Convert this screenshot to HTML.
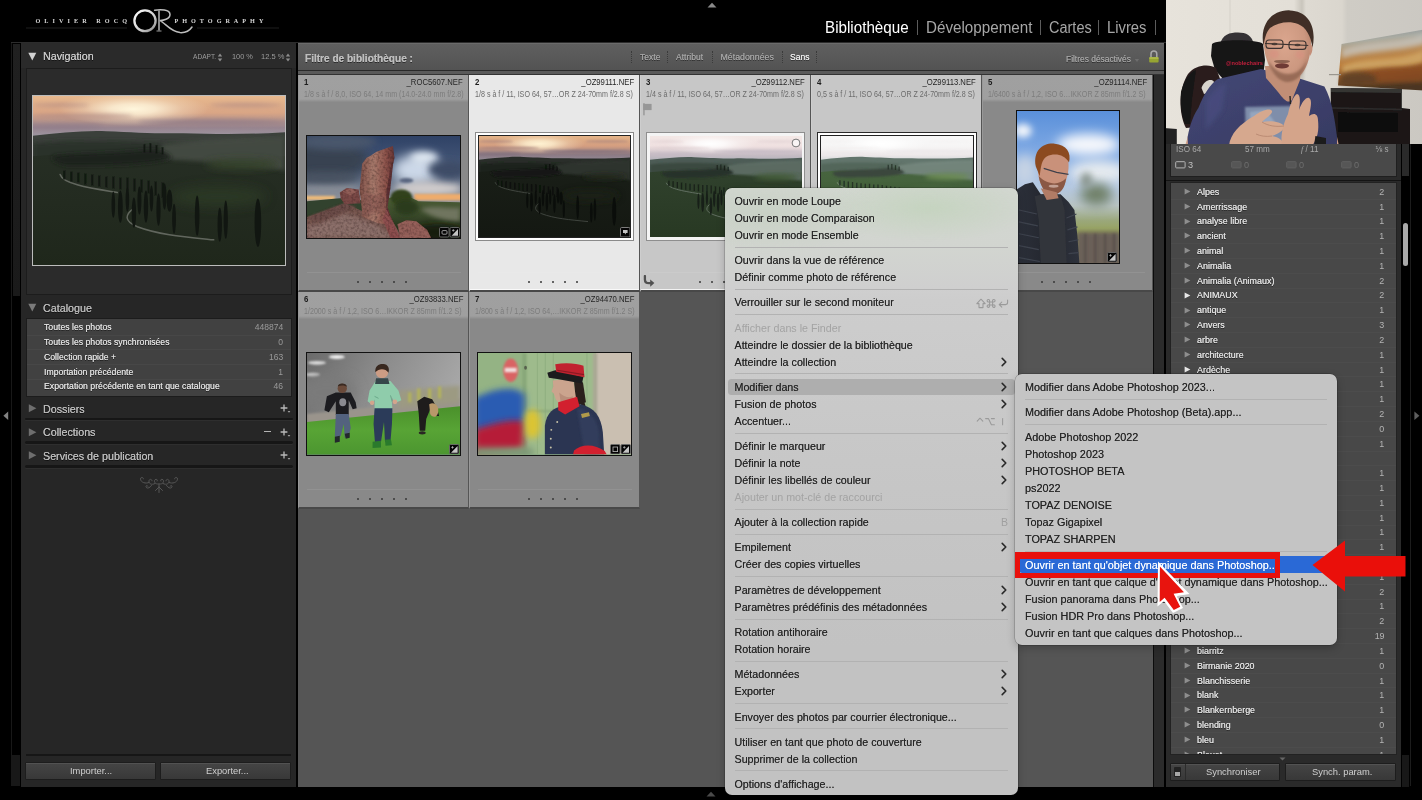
<!DOCTYPE html>
<html lang="fr">
<head>
<meta charset="utf-8">
<title>Lightroom Classic</title>
<style>
*{box-sizing:border-box;margin:0;padding:0}
html,body{width:1422px;height:800px;overflow:hidden;background:#000}
body{font-family:"Liberation Sans",sans-serif;position:relative;opacity:.999;color:#ccc;-webkit-font-smoothing:antialiased}
.abs{position:absolute}
.t{position:absolute;white-space:nowrap;line-height:1;transform-origin:0 50%;transform:scaleX(.96)}
.tr{position:absolute;white-space:nowrap;line-height:1;transform-origin:100% 50%;transform:scaleX(.95);text-align:right}
svg{display:block}
/* left panel */
#lp{left:21px;top:43px;width:275px;height:743.5px;background:#262626}
.hdr{font-size:10.9px;color:#c9c9c9;transform:scaleX(.985);text-shadow:0 0 .4px #c9c9c9,0 .8px .6px rgba(0,0,0,.55)}
.cat{font-size:9.1px;color:#dedede;transform:scaleX(.955);text-shadow:0 0 .3px #ddd,0 .8px .6px rgba(0,0,0,.55)}
.catn{font-size:9.1px;color:#9a9a9a;transform:scaleX(.94)}
.sep{position:absolute;left:25px;width:268px;height:2.6px;background:#161616;border-radius:1.5px;box-shadow:0 1px 0 #2e2e2e}
.btn{position:absolute;height:18px;background:linear-gradient(#454545,#383838);border:1px solid #1d1d1d;border-radius:1px;box-shadow:inset 0 1px 0 #525252}
/* grid */
#grid{left:298px;top:43px;width:855px;height:743.5px;background:#555}
.cell{position:absolute;width:171px;height:217px;background:#898989;border-right:1px solid #555;border-bottom:2px solid #484848;border-left:1px solid rgba(255,255,255,.13)}
.cell .h{position:absolute;left:0;top:0;right:0;height:26.5px;background:linear-gradient(#a0a0a0 0,#9f9f9f 24px,#8e8e8e 26.5px)}
.cell.s1,.cell.s2{box-shadow:inset 0 -1px 0 rgba(255,255,255,.75)}
.cell.s1{background:#e8e8e8}.cell.s1 .h{background:#e8e8e8}
.cell.s2{background:#c7c7c7}.cell.s2 .h{background:#c7c7c7}
.cn{font-size:8.2px;color:#1c1c1c;font-weight:bold}
.fn{font-size:8.2px;color:#262626;transform:scaleX(.94)}
.ex{font-size:8.8px;color:#7d7d7d}
.s1 .ex,.s2 .ex{color:#6a6a6a}
/* menus */
.menu{position:absolute;border-radius:7px;box-shadow:0 0 0 .5px rgba(0,0,0,.3),0 3px 8px rgba(0,0,0,.22);font-size:10.7px;color:#252525}
.mi{position:absolute;left:10px;white-space:nowrap;line-height:17px;height:17px;text-shadow:0 0 .4px rgba(30,30,30,.7)}
.mi.d{color:#a3a3a3;text-shadow:none}
.ms{position:absolute;left:10px;right:10px;height:1px;background:#b2b2b2}
.chev{position:absolute;right:11px;width:6px;height:10px}
.sc{position:absolute;right:10px;white-space:nowrap;line-height:17px;color:#a0a0a0;font-size:10.5px}
/* right panel */
.kw{font-size:9.5px;color:#e0e0e0;transform:scaleX(.94);text-shadow:0 0 .3px #ddd,0 .8px .6px rgba(0,0,0,.5)}
.kn{font-size:9.5px;color:#b4b4b4;transform:scaleX(.94)}
.fl{text-shadow:0 0 .35px currentColor,0 .8px .6px rgba(0,0,0,.5)}
</style>
</head>
<body>
<svg width="0" height="0" style="position:absolute">
<defs>
  <filter id="b1" filterUnits="userSpaceOnUse" x="-40" y="-40" width="380" height="300"><feGaussianBlur stdDeviation="1"/></filter>
  <filter id="b2" filterUnits="userSpaceOnUse" x="-40" y="-40" width="380" height="300"><feGaussianBlur stdDeviation="2"/></filter>
  <filter id="b3" filterUnits="userSpaceOnUse" x="-40" y="-40" width="380" height="300"><feGaussianBlur stdDeviation="3.5"/></filter>
  <filter id="b6" filterUnits="userSpaceOnUse" x="-40" y="-40" width="380" height="300"><feGaussianBlur stdDeviation="6"/></filter>
  <filter id="b05" filterUnits="userSpaceOnUse" x="-40" y="-40" width="380" height="300"><feGaussianBlur stdDeviation=".5"/></filter>

  <filter id="tex" x="0" y="0" width="100%" height="100%"><feTurbulence type="fractalNoise" baseFrequency=".38" numOctaves="2" seed="3" result="n"/><feColorMatrix in="n" type="matrix" values="0 0 0 0 0  0 0 0 0 0  0 0 0 0 0  1.3 0 0 0 -.5" result="a"/><feFlood flood-color="#3a2422"/><feComposite in2="a" operator="in" result="d"/><feComposite in="d" in2="SourceGraphic" operator="in" result="dd"/><feMerge><feMergeNode in="SourceGraphic"/><feMergeNode in="dd"/></feMerge></filter>
</defs>
</svg>
<svg width="0" height="0" style="position:absolute">
<defs>
  <!-- ============ Rock (154x103) ============ -->
  <linearGradient id="rsky" x1="0" y1="0" x2="0" y2="1"><stop offset="0" stop-color="#2f4266"/><stop offset=".3" stop-color="#465878"/><stop offset=".62" stop-color="#8e939c"/><stop offset="1" stop-color="#8a8f98"/></linearGradient>
  <linearGradient id="rland" x1="0" y1="0" x2="0" y2="1"><stop offset="0" stop-color="#4c5d36"/><stop offset=".45" stop-color="#3a4a2a"/><stop offset="1" stop-color="#181f12"/></linearGradient>
  <linearGradient id="rpil" x1="0" y1="0" x2="1" y2="0"><stop offset="0" stop-color="#7e5048"/><stop offset=".4" stop-color="#a87a6c"/><stop offset=".75" stop-color="#8e544c"/><stop offset="1" stop-color="#643434"/></linearGradient>
  <symbol id="rock" viewBox="0 0 154 103" preserveAspectRatio="none">
    <rect width="154" height="103" fill="url(#rsky)"/>
    <ellipse cx="16" cy="24" rx="46" ry="22" fill="#394251" filter="url(#b6)"/>
    <ellipse cx="30" cy="6" rx="40" ry="8" fill="#4a566c" filter="url(#b3)"/>
    <ellipse cx="110" cy="34" rx="24" ry="15" fill="#ccd8e8" filter="url(#b6)"/>
    <ellipse cx="118" cy="22" rx="14" ry="6" fill="#dfe8f2" filter="url(#b3)"/>
    <ellipse cx="122" cy="53" rx="34" ry="7" fill="#d0cccc" filter="url(#b3)"/>
    <ellipse cx="142" cy="34" rx="20" ry="9" fill="#3e4b66" filter="url(#b3)"/>
    <ellipse cx="100" cy="45" rx="7" ry="2.5" fill="#5a6680" filter="url(#b1)"/>
    <ellipse cx="22" cy="53" rx="30" ry="5" fill="#8a8f98" filter="url(#b3)"/>
    <ellipse cx="20" cy="42" rx="32" ry="6" fill="#4a5362" filter="url(#b3)"/>
    <rect x="-2" y="60.5" width="30" height="4" fill="#efbb78" filter="url(#b1)"/>
    <rect x="108" y="58.5" width="48" height="6.5" fill="#eeac6c" filter="url(#b1)"/>
    <path d="M0 66 L30 63 L42 62 L60 66 L60 103 L0 103Z" fill="#33422f" filter="url(#b05)"/>
    <path d="M78 64 C95 58 105 62 112 66 L154 67 L154 103 L78 103Z" fill="url(#rland)"/>
    <path d="M114 74 C126 69 146 74 154 72 L154 86 C140 87 126 82 114 74Z" fill="#70755f" filter="url(#b2)"/>
    <ellipse cx="95" cy="62" rx="11" ry="8" fill="#33431f" filter="url(#b1)"/><ellipse cx="100" cy="72" rx="12" ry="8" fill="#2c3a1e" filter="url(#b2)"/>
    <ellipse cx="132" cy="97" rx="26" ry="8" fill="#151b10" filter="url(#b3)"/>
    <g filter="url(#tex)">
    <!-- ground -->
    <path d="M0 82 L22 74 L38 68 L56 76 L84 82 L96 103 L0 103Z" fill="#76564f"/>
    <path d="M0 92 L40 78 L70 90 L90 103 L0 103Z" fill="#8c706a" filter="url(#b2)"/>
    <path d="M0 82 L38 68 L50 72 L10 88Z" fill="#6c4e4a" filter="url(#b1)"/>
    <!-- small rock -->
    <path d="M33 57 L40 52.5 L52 54 L54 68 L38 69 L34 63Z" fill="#7a4846"/>
    <path d="M36 56 L44 53 L50 56 L44 60Z" fill="#94605a" filter="url(#b05)"/>
    <!-- pillar -->
    <path d="M64 20 L70 16 L86.5 10 L88 22 L85 36 L83 53 L80.5 72 L88 90 L72 88 L56 82 L53 54 L55.5 28 L60 22Z" fill="url(#rpil)"/>
    <path d="M84 32 L87 24 L84 52 L81 72 L86 87 L79 82 L80 56Z" fill="#5e3234" filter="url(#b05)"/>
    <path d="M57 56 C64 60 74 58 80 64 L80 74 L58 80Z" fill="#8a5a52" opacity=".7" filter="url(#b1)"/>
    <path d="M91 89 L100 85 L110 86 L121 95 L125 103 L94 103Z" fill="#95605a"/>
    <path d="M80 74 L88 90 L94 103 L84 103 L76 84Z" fill="#8e5050" filter="url(#b05)"/>
    </g>
  </symbol>

  <!-- ============ Portrait (103x154) ============ -->
  <linearGradient id="psky" x1="0" y1="0" x2="0" y2="1"><stop offset="0" stop-color="#5a90da"/><stop offset=".28" stop-color="#80aae4"/><stop offset=".5" stop-color="#b4c8e2"/><stop offset=".62" stop-color="#b9c4c4"/><stop offset=".72" stop-color="#9aa77a"/><stop offset=".8" stop-color="#97a258"/><stop offset="1" stop-color="#807c5a"/></linearGradient>
  <linearGradient id="pjk" x1="0" y1="0" x2="1" y2="0"><stop offset="0" stop-color="#2c303a"/><stop offset=".5" stop-color="#23262e"/><stop offset="1" stop-color="#2e323c"/></linearGradient>
  <symbol id="portrait" viewBox="0 0 103 154" preserveAspectRatio="none">
    <rect width="103" height="154" fill="url(#psky)"/>
    <ellipse cx="72" cy="34" rx="32" ry="11" fill="#f6f8fc" filter="url(#b6)"/>
    <ellipse cx="6" cy="20" rx="9" ry="7" fill="#f0f4fa" filter="url(#b3)"/>
    <ellipse cx="82" cy="62" rx="30" ry="12" fill="#e6ebf0" filter="url(#b6)"/>
    <ellipse cx="8" cy="60" rx="12" ry="16" fill="#c6d3e4" filter="url(#b6)"/>
    <ellipse cx="80" cy="84" rx="16" ry="11" fill="#6f8068" filter="url(#b6)"/>
    <ellipse cx="70" cy="70" rx="6" ry="8" fill="#8a9690" filter="url(#b3)"/>
    <rect x="60" y="122" width="45" height="34" fill="#6a6058" filter="url(#b2)"/>
    <g fill="#584e48" filter="url(#b1)"><rect x="68" y="124" width="2" height="30"/><rect x="78" y="124" width="2" height="30"/><rect x="88" y="124" width="2" height="30"/><rect x="97" y="124" width="2" height="30"/></g>
    <!-- jacket -->
    <path d="M0 79 L8 74 L16 72 L24 84 L44 84 L52 92 L58 100 L61 126 L63 154 L0 154Z" fill="url(#pjk)"/>
    <path d="M18 86 L26 84 L44 85 L48 100 L50 154 L24 154 L22 110Z" fill="#33353b" filter="url(#b05)"/>
    <g stroke="#3e434e" stroke-width="1.2" filter="url(#b05)"><path d="M2 100 L20 104 M2 112 L21 116 M2 124 L22 128 M2 136 L22 140 M2 148 L23 152 M50 108 L60 104 M51 120 L61 117 M52 132 L62 130 M52 144 L62 143"/></g>
    <!-- head -->
    <path d="M21 52 C22 40 30 36 38 37 C48 38 53 46 52 58 C51 70 46 82 38 84 C30 85 23 76 21.5 64Z" fill="#c9917a"/>
    <path d="M19 56 C16 40 26 32 38 33 C50 34 55 42 52.5 52 C48 44 38 42 30 46 C25 49 24 56 23 66 Z" fill="#8c4a20"/>
    <path d="M22 66 C24 80 32 87 40 84 C47 81 49 74 49.5 68 C42 76 30 74 22 66Z" fill="#8a5844" filter="url(#b05)"/>
    <path d="M27 58 L40 62 L52 64" stroke="#40404a" stroke-width="1.2" fill="none"/>
    <ellipse cx="37" cy="76" rx="5" ry="1.4" fill="#e8d0c8" opacity=".6"/>
    <path d="M24 78 L30 90 L42 88 L40 82Z" fill="#b07c66"/>
  </symbol>

  <!-- ============ Kids (154x103) ============ -->
  <linearGradient id="kbg" x1="0" y1="0" x2="1" y2=".35"><stop offset="0" stop-color="#6a6a6a"/><stop offset=".45" stop-color="#8a8a8a"/><stop offset="1" stop-color="#a8a8a8"/></linearGradient>
  <linearGradient id="kgr" x1="0" y1="0" x2="0" y2="1"><stop offset="0" stop-color="#4a902b"/><stop offset=".5" stop-color="#58a435"/><stop offset="1" stop-color="#4c9630"/></linearGradient>
  <symbol id="kids" viewBox="0 0 154 103" preserveAspectRatio="none">
    <rect width="154" height="103" fill="url(#kbg)"/>
    <ellipse cx="30" cy="4" rx="8" ry="2" fill="#efefef" filter="url(#b1)"/><ellipse cx="10" cy="10" rx="9" ry="1.8" fill="#dedede" filter="url(#b1)"/><ellipse cx="6" cy="22" rx="7" ry="2" fill="#dcdcdc" filter="url(#b1)"/>
    <ellipse cx="20" cy="40" rx="30" ry="18" fill="#7a7a7a" filter="url(#b6)"/>
    <path d="M0 62 L154 46 L154 56 L0 72Z" fill="#9a948c" filter="url(#b1)"/>
    <path d="M92 38 L154 33 L154 50 L92 56Z" fill="#9c9a82" filter="url(#b2)"/>
    <g fill="#b4b45a" filter="url(#b1)"><rect x="102" y="40" width="3" height="10"/><rect x="111" y="36" width="3" height="12"/><rect x="122" y="36" width="3" height="12"/><rect x="132" y="34" width="3" height="12"/></g>
    <path d="M0 70 L154 54 L154 103 L0 103Z" fill="url(#kgr)"/>
    <!-- left kid -->
    <path d="M20 44 L29 40 L44 40 L49 50 L50 56 L46 57 L42 48 L42 63 L29 63 L29 49 L22 60 L17.5 58Z" fill="#1c1c20"/>
    <circle cx="35.5" cy="36" r="4.7" fill="#6a4a3a"/>
    <path d="M31 34 C31 30 40 30 40.4 34.5 C38 32.5 34 32.5 31 34Z" fill="#3a2a22"/>
    <ellipse cx="36" cy="50" rx="3.5" ry="4" fill="#8a8a90" filter="url(#b05)"/>
    <path d="M29 62 L42 62 L44 76 L42 84 L38 86 L37 72 L34 84 L29.5 88 L28 84Z" fill="#53627e"/>
    <path d="M28 85 L33 84 L33 90 L28 91Z M38 82 L43 81 L43 86 L39 87Z" fill="#23282c"/>
    <!-- center kid -->
    <path d="M63 38 L69 28.5 L84 28.5 L92 38 L95 48 L88 51 L85 44 L86 58 L68 58 L68 47 L66 53 L61 49Z" fill="#8fccab"/>
    <path d="M68 44 L72 46 M84 43 L86 50" stroke="#6aa88a" stroke-width="1"/>
    <circle cx="75.5" cy="19.5" r="6.2" fill="#cc9c84"/>
    <path d="M68.8 19.5 C68 12 74 10.2 78.5 11.4 C82.5 12.6 83 17 82 20 C79 15.5 72.5 15.5 68.8 19.5Z" fill="#38281f"/>
    <path d="M69.5 25.5 L81.5 25.5 L83 31.5 L68.5 31.5Z" fill="#36474a"/>
    <circle cx="88.5" cy="49.5" r="2.4" fill="#d4a48c"/><circle cx="65.5" cy="50.5" r="2.2" fill="#d4a48c"/>
    <path d="M68 56 L86 56 L85.5 72 L84 90 L78.5 90 L77.5 70 L74.5 90 L68.5 92 L67 72Z" fill="#2b3b59"/>
    <path d="M66 90 L74.5 89 L74.5 96 L66 96.5Z M78.5 88 L84.5 87.5 L85.5 93.5 L79 94Z" fill="#2a7a2c"/>
    <!-- right kid -->
    <path d="M111 49 L118 44.5 L126 47 L131 56 L133 64 L128 64 L124 57 L120 67 L119 79 L113.5 79 L112.5 62Z" fill="#1e1c1c"/>
    <path d="M123 52 C128 49 133 53 132 60 C131 66 126 66 124 62Z" fill="#b8986a"/>
    <ellipse cx="116" cy="81" rx="3.5" ry="1.6" fill="#2a2624"/>
  </symbol>

  <!-- ============ Soldier (155x103) ============ -->
  <symbol id="soldier" viewBox="0 0 155 103" preserveAspectRatio="none">
    <rect width="155" height="103" fill="#9ebb8c"/>
    <rect x="0" y="0" width="46" height="103" fill="#94b384"/>
    <rect x="45" y="0" width="4" height="103" fill="#86a678" filter="url(#b1)"/>
    <g stroke="#92b182" stroke-width="1.2" filter="url(#b05)"><path d="M60 0 V103 M68 0 V103 M76 0 V103 M110 0 V103"/></g>
    <rect x="50" y="58" width="70" height="2" fill="#8aa87a" filter="url(#b1)"/>
    <rect x="119" y="0" width="36" height="103" fill="#cabfb1"/>
    <rect x="116" y="0" width="4.5" height="103" fill="#aaa894" filter="url(#b1)"/>
    <ellipse cx="33" cy="17.5" rx="7.5" ry="12" fill="#d96464" filter="url(#b1)"/>
    <rect x="27" y="15" width="12" height="4.5" fill="#f2dede" filter="url(#b1)"/>
    <ellipse cx="48" cy="15" rx="1.4" ry="2" fill="#55604c" filter="url(#b05)"/>
    <!-- flag -->
    <path d="M-4 46 C16 36 36 32 47 42 L47 78 L-4 82Z" fill="#2a5bb2" filter="url(#b3)"/>
    <path d="M-4 78 C20 70 36 66 47 70 L45 98 L-4 104Z" fill="#b61f38" filter="url(#b3)"/>
    <ellipse cx="55" cy="72" rx="8.5" ry="15" fill="#dcc430" filter="url(#b3)"/>
    <rect x="-4" y="96" width="60" height="10" fill="#7e9a78" filter="url(#b3)"/>
    <!-- soldier -->
    <path d="M97 26 L106 30 L109 50 L98 54Z" fill="#2a201c"/>
    <path d="M104 44 C108 50 110 56 108 60 L104 58Z" fill="#2a201c"/>
    <path d="M75.5 28 L96 26 L99 46 L93 53 L83 53 L78.5 47 L76.5 41 L74.2 39 L76 34Z" fill="#cba48e"/>
    <path d="M82 40 C86 44 92 46 96 44 L94 52 L84 53Z" fill="#b88e7a" filter="url(#b05)"/>
    <path d="M70 20 L78 17.5 L106.5 24 L105 31 L80 26.5 L71.5 25Z" fill="#1b1b1d"/>
    <path d="M78 11.5 C88 9.5 100 10.5 106.5 13 L107.5 24.5 L79 19Z" fill="#c1222f"/>
    <path d="M80 17.5 L107 22" stroke="#8a1a24" stroke-width="1.2"/>
    <path d="M67.5 74 C69 60 77 55 86 54 L104 52 C118 56 124 64 126 80 L127.5 103 L67.5 103Z" fill="#2b3552"/>
    <path d="M100 56 C112 58 120 66 122 80 L123 103 L108 103Z" fill="#323d5c" filter="url(#b1)"/>
    <path d="M81 50 L100 44.5 L102.5 54 L88 62.5 L81 58Z" fill="#d2202f"/>
    <path d="M104 62 L112 60 L113 64 L105 66Z" fill="#b09a4a"/>
    <g fill="#c8c2a8"><circle cx="74" cy="78" r="1"/><circle cx="73.5" cy="87" r="1"/><circle cx="73.5" cy="96" r="1"/><circle cx="80" cy="70" r="1"/></g>
    <path d="M97 99 C104 92 118 92 128 99.5 L130 103 L96 103Z" fill="#d2202f"/>
  </symbol>
</defs>
</svg>
<!-- ===== top bar ===== -->
<div class="abs" style="left:0;top:0;width:1422px;height:43px;background:#000"></div>
<div class="abs" style="left:11px;top:42px;width:1400px;height:1px;background:#2c2c2c"></div>
<!-- identity plate -->
<svg class="abs" style="left:20px;top:0" width="280" height="44" viewBox="0 0 280 44">
  <defs>
    <linearGradient id="lgO" x1="0" y1="0" x2="1" y2="1"><stop offset="0" stop-color="#fff"/><stop offset=".6" stop-color="#cfcfcf"/><stop offset="1" stop-color="#8a8a8a"/></linearGradient>
  </defs>
  <text x="15.5" y="23" font-family="Liberation Serif" font-weight="bold" font-size="6.2" letter-spacing="4.05" fill="#d8d8d8">OLIVIER  ROCQ</text>
  <text x="154.5" y="22.6" font-family="Liberation Serif" font-weight="bold" font-size="6.2" letter-spacing="3.98" fill="#d8d8d8">PHOTOGRAPHY</text>
  <rect x="6" y="27.6" width="101" height=".8" fill="#262626"/>
  <rect x="177" y="27.6" width="82" height=".8" fill="#262626"/>
  <ellipse cx="125" cy="20.8" rx="10.6" ry="10.4" fill="none" stroke="url(#lgO)" stroke-width="2.3"/>
  <path d="M134.6 10.2 C140 9.4 150 9.2 150 14.6 C150 19.2 143 20.6 139.4 20.4 C145 22.5 150 31.5 160 32.6 C166 33 170 30 172 27" fill="none" stroke="#bdbdbd" stroke-width="1.5" stroke-linecap="round"/>
  <path d="M139 10.2 L139 30.5" stroke="#9a9a9a" stroke-width="1.8"/>
  <path d="M136.5 31 L141.5 31" stroke="#9a9a9a" stroke-width="1"/>
</svg>
<!-- top centre disclosure triangle -->
<svg class="abs" style="left:707px;top:2px" width="10" height="6"><path d="M0.5 5.5 L5 0.8 L9.5 5.5Z" fill="#8a8a8a"/></svg>
<svg class="abs" style="left:706px;top:791px" width="10" height="6"><path d="M0.5 5.5 L5 0.8 L9.5 5.5Z" fill="#4a4a4a"/></svg>
<!-- module picker -->
<div class="t" style="left:825px;top:19.6px;font-size:15.6px;color:#fff;transform:scaleX(.975)">Bibliothèque</div>
<div class="t" style="left:926px;top:19.6px;font-size:15.6px;color:#a6a6a6;transform:scaleX(.975)">Développement</div>
<div class="t" style="left:1049px;top:19.6px;font-size:15.6px;color:#a6a6a6;transform:scaleX(.93)">Cartes</div>
<div class="t" style="left:1107px;top:19.6px;font-size:15.6px;color:#a6a6a6;transform:scaleX(.95)">Livres</div>
<div class="abs" style="left:917px;top:20px;width:1px;height:15px;background:#5c5c5c"></div>
<div class="abs" style="left:1040px;top:20px;width:1px;height:15px;background:#5c5c5c"></div>
<div class="abs" style="left:1098px;top:20px;width:1px;height:15px;background:#5c5c5c"></div>
<div class="abs" style="left:1155px;top:20px;width:1px;height:15px;background:#5c5c5c"></div>
<!-- side strips / arrows -->
<div class="abs" style="left:11px;top:43px;width:1px;height:743px;background:#181818"></div>
<div class="abs" style="left:13px;top:44px;width:7px;height:252px;background:linear-gradient(#202020,#1a1a1a)"></div>
<div class="abs" style="left:12px;top:755px;width:8px;height:31px;background:#181818"></div>
<svg class="abs" style="left:3px;top:410.5px" width="6" height="10"><path d="M5.2 0.6 L0.4 4.8 L5.2 9Z" fill="#828282"/></svg>
<!-- ===== left panel ===== -->
<div id="lp" class="abs">
  <div class="abs" style="left:0;top:0;width:275px;height:25px;background:#2a2a2a"></div>
</div>
<svg class="abs" style="left:28px;top:52px" width="9" height="9"><path d="M0.3 0.8 L8.3 0.8 L4.3 8.4Z" fill="#d2d2d2"/></svg>
<div class="t hdr" style="left:43px;top:51px">Navigation</div>
<div class="t" style="left:192.5px;top:53.3px;font-size:7px;color:#9c9c9c;transform:scaleX(.94)">ADAPT.</div>
<svg class="abs" style="left:217px;top:52.5px" width="6" height="9"><path d="M3 0.6 L5.2 3.4 L0.8 3.4Z M3 8.4 L5.2 5.6 L0.8 5.6Z" fill="#8e8e8e"/></svg>
<div class="t" style="left:232px;top:53.3px;font-size:7.6px;color:#9c9c9c;transform:scaleX(.97)">100 %</div>
<div class="t" style="left:260.5px;top:53.3px;font-size:7.6px;color:#9c9c9c;transform:scaleX(.99)">12.5 %</div>
<svg class="abs" style="left:285px;top:52.5px" width="6" height="9"><path d="M3 0.6 L5.2 3.4 L0.8 3.4Z M3 8.4 L5.2 5.6 L0.8 5.6Z" fill="#8e8e8e"/></svg>
<!-- navigator box -->
<div class="abs" style="left:26px;top:68px;width:266px;height:227px;background:#2b2b2b;border:1px solid #1c1c1c"></div>
<div class="abs" id="navimg" style="left:32px;top:95px;width:254px;height:171px;border:1.5px solid #bcbcbc;background:#222;overflow:hidden">
  <svg width="100%" height="100%" viewBox="0 0 251 168" preserveAspectRatio="none" style="display:block">
<defs>
<linearGradient id="tnavsky" x1="0" y1="0" x2="0" y2="1"><stop offset="0" stop-color="#e8b98e"/><stop offset=".4" stop-color="#d9a585"/><stop offset=".75" stop-color="#98858f"/><stop offset="1" stop-color="#9f9aa6"/></linearGradient>
<radialGradient id="tnavsun" cx=".5" cy=".5" r=".5"><stop offset="0" stop-color="#fff6dc" stop-opacity="1"/><stop offset=".3" stop-color="#fff6dc" stop-opacity=".8"/><stop offset=".65" stop-color="#fff6dc" stop-opacity=".3"/><stop offset="1" stop-color="#fff6dc" stop-opacity="0"/></radialGradient>
<linearGradient id="tnavfore" x1="0" y1="0" x2="0" y2="1"><stop offset="0" stop-color="#262e24"/><stop offset="1" stop-color="#1f271b"/></linearGradient>
</defs>
<rect width="251" height="168" fill="#1f271b"/>
<rect width="251" height="42" fill="url(#tnavsky)"/>
<ellipse cx="100" cy="13" rx="75" ry="17" fill="url(#tnavsun)"/>
<g filter="url(#b2)" fill="#b08a84" opacity=".7"><ellipse cx="50" cy="20" rx="50" ry="2.2"/><ellipse cx="28" cy="9" rx="28" ry="1.8"/><ellipse cx="212" cy="9" rx="36" ry="2"/></g>
<g filter="url(#b2)" fill="#8e7a88" opacity=".75"><ellipse cx="180" cy="26" rx="75" ry="2.8"/><ellipse cx="30" cy="30" rx="40" ry="2.4"/></g>
<path d="M0 39.5 C25 37 50 34 73 35 C100 36 120 37.5 150 37 C180 38 215 38.5 251 36 L251 70 L0 70Z" fill="#3a403b" filter="url(#b05)"/>
<path d="M0 47 C40 43 90 44 140 47 C180 49 215 44 251 42 L251 90 L0 90Z" fill="#2b322b" filter="url(#b2)"/>
<path d="M0 60 C40 55 90 60 140 64 C175 60 215 58 251 60 L251 168 L0 168Z" fill="url(#tnavfore)"/>
<path d="M128 48 C170 43 215 41 251 40 L251 74 C214 68 172 66 128 62Z" fill="#485047" opacity=".8" filter="url(#b2)"/>
<ellipse cx="208" cy="68" rx="36" ry="5" fill="#35432c" filter="url(#b3)"/>
<ellipse cx="185" cy="100" rx="48" ry="10" fill="#2f3d28" opacity=".7" filter="url(#b6)"/>
<path d="M20 60 C40 56 80 57 108 54 C124 52 136 56 138 62 C120 69 60 70 32 69 C22 67 18 63 20 60Z" fill="#1e231e" filter="url(#b2)"/>
<path d="M27 78 C30 88 60 92 84 96 M100 112 C92 118 90 124 104 130 C125 138 150 140 180 143" fill="none" stroke="#72766e" stroke-width="1.5" stroke-linecap="round" filter="url(#b05)" opacity=".8"/>
<g fill="#111611">
<g filter="url(#b05)" opacity=".85"><path d="M30 74 h2.4 v9 h-2.4z M37 75 h2.4 v10 h-2.4z M44 76 h2.2 v10 h-2.2z M51 77 h2.2 v11 h-2.2z M58 78 h2.2 v11 h-2.2z M65 79 h2.2 v11 h-2.2z M72 80 h2.2 v11 h-2.2z M79 80 h2.2 v12 h-2.2z M86 81 h2.2 v12 h-2.2z M93 81 h2.2 v13 h-2.2z M100 82 h2.2 v13 h-2.2z M107 83 h2.2 v13 h-2.2z M114 84 h2.2 v13 h-2.2z M121 85 h2.2 v14 h-2.2z M128 86 h2.6 v15 h-2.6z"/>
<path d="M110 48 h2 v8 h-2z M116 47 h2 v9 h-2z M122 49 h2 v8 h-2z M128 51 h2 v7 h-2z"/></g>
<ellipse cx="80" cy="108" rx="1.8" ry="13"/><ellipse cx="87" cy="110" rx="2.4" ry="16"/><ellipse cx="94" cy="103" rx="1.8" ry="12"/>
<ellipse cx="100.5" cy="116" rx="2.2" ry="15"/><ellipse cx="106" cy="104" rx="2" ry="14"/><ellipse cx="112.5" cy="110" rx="2.2" ry="16"/><ellipse cx="118" cy="102" rx="1.8" ry="13"/>
<ellipse cx="125" cy="113" rx="2.1" ry="16"/><ellipse cx="131" cy="100" rx="2" ry="13"/><ellipse cx="136" cy="104" rx="2.8" ry="11"/>
<ellipse cx="140.5" cy="122" rx="1.9" ry="15"/><ellipse cx="163.5" cy="119" rx="2.3" ry="20"/>
<ellipse cx="186" cy="128" rx="2.2" ry="17"/><ellipse cx="192" cy="123" rx="2.1" ry="19"/><ellipse cx="224" cy="126" rx="3.3" ry="24"/>
</g>
</svg>
</div>
<!-- catalogue -->
<svg class="abs" style="left:28px;top:303px" width="9" height="9"><path d="M0.3 0.8 L8.3 0.8 L4.3 8.4Z" fill="#7a7a7a"/></svg>
<div class="t hdr" style="left:43px;top:302.5px;color:#b4b4b4">Catalogue</div>
<div class="abs" style="left:26px;top:318px;width:266px;height:79px;background:#414141;border:1px solid #1c1c1c"></div>
<div class="abs" style="left:27px;top:334.5px;width:264px;height:1px;background:#474747"></div>
<div class="abs" style="left:27px;top:349.3px;width:264px;height:1px;background:#474747"></div>
<div class="abs" style="left:27px;top:364px;width:264px;height:1px;background:#474747"></div>
<div class="abs" style="left:27px;top:378.8px;width:264px;height:1px;background:#474747"></div>
<div class="t cat" style="left:43.5px;top:323.2px">Toutes les photos</div><div class="tr catn" style="right:1139px;top:323.2px">448874</div>
<div class="t cat" style="left:43.5px;top:338px">Toutes les photos synchronisées</div><div class="tr catn" style="right:1139px;top:338px">0</div>
<div class="t cat" style="left:43.5px;top:352.7px">Collection rapide +</div><div class="tr catn" style="right:1139px;top:352.7px">163</div>
<div class="t cat" style="left:43.5px;top:367.6px">Importation précédente</div><div class="tr catn" style="right:1139px;top:367.6px">1</div>
<div class="t cat" style="left:43.5px;top:382.2px">Exportation précédente en tant que catalogue</div><div class="tr catn" style="right:1139px;top:382.2px">46</div>
<!-- collapsed panels -->
<svg class="abs" style="left:28px;top:404px" width="9" height="9"><path d="M0.8 0.3 L8.4 4.3 L0.8 8.3Z" fill="#6e6e6e"/></svg>
<div class="t hdr" style="left:43px;top:403.7px;color:#b9b9b9">Dossiers</div>
<svg class="abs" style="left:279.5px;top:404px" width="11" height="10" viewBox="0 0 11 10"><path d="M4 0.6 V7.4 M0.6 4 H7.4" stroke="#b9b9b9" stroke-width="1.3" fill="none"/><path d="M7.6 7 H10.4 L9 8.8Z" fill="#a0a0a0"/></svg>
<div class="sep" style="top:417.8px"></div>
<svg class="abs" style="left:28px;top:427.5px" width="9" height="9"><path d="M0.8 0.3 L8.4 4.3 L0.8 8.3Z" fill="#6e6e6e"/></svg>
<div class="t hdr" style="left:43px;top:427.2px;color:#b9b9b9">Collections</div>
<div class="abs" style="left:263.7px;top:431px;width:7.6px;height:1.4px;background:#b4b4b4"></div>
<svg class="abs" style="left:279.5px;top:427.7px" width="11" height="10" viewBox="0 0 11 10"><path d="M4 0.6 V7.4 M0.6 4 H7.4" stroke="#b9b9b9" stroke-width="1.3" fill="none"/><path d="M7.6 7 H10.4 L9 8.8Z" fill="#a0a0a0"/></svg>
<div class="sep" style="top:441.4px"></div>
<svg class="abs" style="left:28px;top:451px" width="9" height="9"><path d="M0.8 0.3 L8.4 4.3 L0.8 8.3Z" fill="#6e6e6e"/></svg>
<div class="t hdr" style="left:43px;top:450.7px;color:#b9b9b9">Services de publication</div>
<svg class="abs" style="left:279.5px;top:451.3px" width="11" height="10" viewBox="0 0 11 10"><path d="M4 0.6 V7.4 M0.6 4 H7.4" stroke="#b9b9b9" stroke-width="1.3" fill="none"/><path d="M7.6 7 H10.4 L9 8.8Z" fill="#a0a0a0"/></svg>
<div class="sep" style="top:465px"></div>
<!-- ornament -->
<svg class="abs" style="left:138px;top:475px" width="42" height="19" viewBox="0 0 42 19">
  <g fill="none" stroke="#565656" stroke-width="1" stroke-linecap="round">
    <path d="M21 17.5 L21 9"/><path d="M21 12 L17.5 15.5 M21 12 L24.5 15.5"/>
    <path d="M20.5 9 C17 9.5 15.5 6.5 17 4.8 C18.2 3.6 20 4.6 19.2 6"/><path d="M21.5 9 C25 9.5 26.5 6.5 25 4.8 C23.8 3.6 22 4.6 22.8 6"/>
    <path d="M17 8.5 C13.5 10.5 10.5 8.5 11 5.8 C11.4 3.8 14 3.8 14 5.8"/><path d="M25 8.5 C28.5 10.5 31.5 8.5 31 5.8 C30.6 3.8 28 3.8 28 5.8"/>
    <path d="M11 7.5 C7.5 9 3 7.5 2.5 4.2 C2.3 2 5.2 1.6 5.4 3.8"/><path d="M31 7.5 C34.5 9 39 7.5 39.5 4.2 C39.7 2 36.800000000000004 1.6 36.6 3.8"/>
    <path d="M13.5 10.5 C11.5 13.5 8.5 13.8 8 11.8 C7.7 10.4 9.6 10 9.8 11.2"/><path d="M28.5 10.5 C30.5 13.5 33.5 13.8 34 11.8 C34.3 10.4 32.4 10 32.2 11.2"/>
  </g>
</svg>
<!-- bottom buttons -->
<div class="abs" style="left:26px;top:753.5px;width:265px;height:2px;background:#161616"></div>
<div class="btn" style="left:25px;top:762px;width:131px"></div>
<div class="btn" style="left:160px;top:762px;width:131px"></div>
<div class="t" style="left:69.5px;top:766.3px;font-size:9.8px;color:#cfcfcf;transform:scaleX(.955)">Importer...</div>
<div class="t" style="left:205.5px;top:766.3px;font-size:9.8px;color:#cfcfcf;transform:scaleX(.955)">Exporter...</div>
<!-- ===== grid ===== -->
<div id="grid" class="abs"></div>
<div class="abs" style="left:298px;top:43px;width:866px;height:28px;background:linear-gradient(#5f5f5f,#535353);border-top:1px solid #6b6b6b;border-bottom:1.5px solid #2a2a2a"></div>
<div class="abs" style="left:298px;top:71px;width:866px;height:4px;background:#5a5a5a;border-bottom:1.4px solid #333"></div>
<div class="abs" style="left:1153px;top:75px;width:11px;height:711.5px;background:#2b2b2b;border-left:1.5px solid #0c0c0c"></div>
<div class="t fl" style="left:305px;top:53.2px;font-size:10.6px;color:#bdbdbd;font-weight:bold;transform:scaleX(.95)">Filtre de bibliothèque :</div>
<div class="t fl" style="left:639.5px;top:52.8px;font-size:8.8px;color:#a4a4a4;transform:scaleX(.97)">Texte</div>
<div class="t fl" style="left:675.5px;top:52.8px;font-size:8.8px;color:#a4a4a4;transform:scaleX(.97)">Attribut</div>
<div class="t fl" style="left:720.5px;top:52.8px;font-size:8.8px;color:#a4a4a4;transform:scaleX(1)">Métadonnées</div>
<div class="t fl" style="left:790px;top:52.8px;font-size:8.8px;color:#ececec;transform:scaleX(.97)">Sans</div>
<div class="abs" style="left:631px;top:51px;width:0;height:12px;border-left:1px dotted #3a3a3a"></div>
<div class="abs" style="left:667px;top:51px;width:0;height:12px;border-left:1px dotted #3a3a3a"></div>
<div class="abs" style="left:712px;top:51px;width:0;height:12px;border-left:1px dotted #3a3a3a"></div>
<div class="abs" style="left:782px;top:51px;width:0;height:12px;border-left:1px dotted #3a3a3a"></div>
<div class="abs" style="left:816px;top:51px;width:0;height:12px;border-left:1px dotted #3a3a3a"></div>
<div class="t fl" style="left:1066px;top:55px;font-size:8.8px;color:#a2a2a2;transform:scaleX(.955)">Filtres désactivés</div>
<svg class="abs" style="left:1134px;top:58px" width="6" height="5"><path d="M0.8 1 L5.2 1 L3 4Z" fill="#6e6e6e"/></svg>
<svg class="abs" style="left:1147px;top:49px" width="13" height="15" viewBox="0 0 13 15"><path d="M4 8.4 V5 A2.9 2.9 0 0 1 9.8 5 V8.4" fill="none" stroke="#a9a9a9" stroke-width="1.5"/><rect x="2.2" y="8.2" width="9.4" height="5.4" rx="1" fill="#97a532"/><rect x="2.2" y="8.2" width="9.4" height="1.6" rx=".8" fill="#b4c04e"/></svg>

<!-- row 1 -->
<div class="cell " style="left:298px;top:75px"><div class="h"></div></div>
<div class="cell s1" style="left:469px;top:75px"><div class="h"></div></div>
<div class="cell s2" style="left:640px;top:75px"><div class="h"></div></div>
<div class="cell s2" style="left:811px;top:75px"><div class="h"></div></div>
<div class="cell " style="left:982px;top:75px"><div class="h"></div></div>
<!-- row 2 -->
<div class="cell" style="left:298px;top:292px"><div class="h"></div></div>
<div class="cell" style="left:469px;top:292px"><div class="h"></div></div>
<!-- cell labels -->
<div class="t cn" style="left:303.5px;top:79.2px">1</div>
<div class="tr fn" style="right:959px;top:79.2px">_ROC5607.NEF</div>
<div class="t ex" style="left:303.5px;top:89.6px;color:#7c7c7c;transform:scaleX(.81)">1/8 s à f / 8,0, ISO 64, 14 mm (14.0-24.0 mm f/2.8)</div>
<div class="abs" style="left:307px;top:272px;width:154px;height:1px;background:rgba(255,255,255,.08)"></div>
<div class="abs" style="left:357.3px;top:281.1px;width:2px;height:2px;border-radius:1px;background:#383838"></div>
<div class="abs" style="left:369.2px;top:281.1px;width:2px;height:2px;border-radius:1px;background:#383838"></div>
<div class="abs" style="left:381.1px;top:281.1px;width:2px;height:2px;border-radius:1px;background:#383838"></div>
<div class="abs" style="left:393.0px;top:281.1px;width:2px;height:2px;border-radius:1px;background:#383838"></div>
<div class="abs" style="left:404.9px;top:281.1px;width:2px;height:2px;border-radius:1px;background:#383838"></div>
<div class="t cn" style="left:474.5px;top:79.2px">2</div>
<div class="tr fn" style="right:788px;top:79.2px">_OZ99111.NEF</div>
<div class="t ex" style="left:474.5px;top:89.6px;color:#6b6b6b;transform:scaleX(.81)">1/8 s à f / 11, ISO 64, 57…OR Z 24-70mm f/2.8 S)</div>
<div class="abs" style="left:478px;top:272px;width:154px;height:1px;background:rgba(255,255,255,.08)"></div>
<div class="abs" style="left:528.3px;top:281.1px;width:2px;height:2px;border-radius:1px;background:#383838"></div>
<div class="abs" style="left:540.2px;top:281.1px;width:2px;height:2px;border-radius:1px;background:#383838"></div>
<div class="abs" style="left:552.1px;top:281.1px;width:2px;height:2px;border-radius:1px;background:#383838"></div>
<div class="abs" style="left:564.0px;top:281.1px;width:2px;height:2px;border-radius:1px;background:#383838"></div>
<div class="abs" style="left:575.9px;top:281.1px;width:2px;height:2px;border-radius:1px;background:#383838"></div>
<div class="t cn" style="left:645.5px;top:79.2px">3</div>
<div class="tr fn" style="right:617px;top:79.2px">_OZ99112.NEF</div>
<div class="t ex" style="left:645.5px;top:89.6px;color:#6b6b6b;transform:scaleX(.81)">1/4 s à f / 11, ISO 64, 57…OR Z 24-70mm f/2.8 S)</div>
<div class="abs" style="left:649px;top:272px;width:154px;height:1px;background:rgba(255,255,255,.08)"></div>
<div class="abs" style="left:699.3px;top:281.1px;width:2px;height:2px;border-radius:1px;background:#383838"></div>
<div class="abs" style="left:711.2px;top:281.1px;width:2px;height:2px;border-radius:1px;background:#383838"></div>
<div class="abs" style="left:723.1px;top:281.1px;width:2px;height:2px;border-radius:1px;background:#383838"></div>
<div class="abs" style="left:735.0px;top:281.1px;width:2px;height:2px;border-radius:1px;background:#383838"></div>
<div class="abs" style="left:746.9px;top:281.1px;width:2px;height:2px;border-radius:1px;background:#383838"></div>
<div class="t cn" style="left:816.5px;top:79.2px">4</div>
<div class="tr fn" style="right:446px;top:79.2px">_OZ99113.NEF</div>
<div class="t ex" style="left:816.5px;top:89.6px;color:#6b6b6b;transform:scaleX(.81)">0,5 s à f / 11, ISO 64, 57…OR Z 24-70mm f/2.8 S)</div>
<div class="abs" style="left:820px;top:272px;width:154px;height:1px;background:rgba(255,255,255,.08)"></div>
<div class="abs" style="left:870.3px;top:281.1px;width:2px;height:2px;border-radius:1px;background:#383838"></div>
<div class="abs" style="left:882.2px;top:281.1px;width:2px;height:2px;border-radius:1px;background:#383838"></div>
<div class="abs" style="left:894.1px;top:281.1px;width:2px;height:2px;border-radius:1px;background:#383838"></div>
<div class="abs" style="left:906.0px;top:281.1px;width:2px;height:2px;border-radius:1px;background:#383838"></div>
<div class="abs" style="left:917.9px;top:281.1px;width:2px;height:2px;border-radius:1px;background:#383838"></div>
<div class="t cn" style="left:987.5px;top:79.2px">5</div>
<div class="tr fn" style="right:275px;top:79.2px">_OZ91114.NEF</div>
<div class="t ex" style="left:987.5px;top:89.6px;color:#7c7c7c;transform:scaleX(.81)">1/6400 s à f / 1,2, ISO 6…IKKOR Z 85mm f/1.2 S)</div>
<div class="abs" style="left:991px;top:272px;width:154px;height:1px;background:rgba(255,255,255,.08)"></div>
<div class="abs" style="left:1041.3px;top:281.1px;width:2px;height:2px;border-radius:1px;background:#383838"></div>
<div class="abs" style="left:1053.2px;top:281.1px;width:2px;height:2px;border-radius:1px;background:#383838"></div>
<div class="abs" style="left:1065.1px;top:281.1px;width:2px;height:2px;border-radius:1px;background:#383838"></div>
<div class="abs" style="left:1077.0px;top:281.1px;width:2px;height:2px;border-radius:1px;background:#383838"></div>
<div class="abs" style="left:1088.9px;top:281.1px;width:2px;height:2px;border-radius:1px;background:#383838"></div>
<div class="t cn" style="left:303.5px;top:296.2px">6</div>
<div class="tr fn" style="right:959px;top:296.2px">_OZ93833.NEF</div>
<div class="t ex" style="left:303.5px;top:306.6px;color:#7c7c7c;transform:scaleX(.81)">1/2000 s à f / 1,2, ISO 6…IKKOR Z 85mm f/1.2 S)</div>
<div class="abs" style="left:307px;top:489px;width:154px;height:1px;background:rgba(255,255,255,.08)"></div>
<div class="abs" style="left:357.3px;top:498.1px;width:2px;height:2px;border-radius:1px;background:#383838"></div>
<div class="abs" style="left:369.2px;top:498.1px;width:2px;height:2px;border-radius:1px;background:#383838"></div>
<div class="abs" style="left:381.1px;top:498.1px;width:2px;height:2px;border-radius:1px;background:#383838"></div>
<div class="abs" style="left:393.0px;top:498.1px;width:2px;height:2px;border-radius:1px;background:#383838"></div>
<div class="abs" style="left:404.9px;top:498.1px;width:2px;height:2px;border-radius:1px;background:#383838"></div>
<div class="t cn" style="left:474.5px;top:296.2px">7</div>
<div class="tr fn" style="right:788px;top:296.2px">_OZ94470.NEF</div>
<div class="t ex" style="left:474.5px;top:306.6px;color:#7c7c7c;transform:scaleX(.81)">1/800 s à f / 1,2, ISO 64,…IKKOR Z 85mm f/1.2 S)</div>
<div class="abs" style="left:478px;top:489px;width:154px;height:1px;background:rgba(255,255,255,.08)"></div>
<div class="abs" style="left:528.3px;top:498.1px;width:2px;height:2px;border-radius:1px;background:#383838"></div>
<div class="abs" style="left:540.2px;top:498.1px;width:2px;height:2px;border-radius:1px;background:#383838"></div>
<div class="abs" style="left:552.1px;top:498.1px;width:2px;height:2px;border-radius:1px;background:#383838"></div>
<div class="abs" style="left:564.0px;top:498.1px;width:2px;height:2px;border-radius:1px;background:#383838"></div>
<div class="abs" style="left:575.9px;top:498.1px;width:2px;height:2px;border-radius:1px;background:#383838"></div>
<!-- ===== thumbnails ===== -->
<!-- 1 rock -->
<div class="abs" style="left:306px;top:134.5px;width:155px;height:104px;border:1px solid #111;background:#444"><svg width="153" height="102"><use href="#rock" width="153" height="102"/></svg></div>
<!-- 2 tuscany dark (most selected) -->
<div class="abs" style="left:474.5px;top:132px;width:159.5px;height:108.5px;border:1px solid #8a8a8a;background:#fff;padding:2px"><div style="width:100%;height:100%;border:1px solid #222;background:#181c16"><svg width="100%" height="100%" viewBox="0 0 251 168" preserveAspectRatio="none" style="display:block">
<defs>
<linearGradient id="tdarksky" x1="0" y1="0" x2="0" y2="1"><stop offset="0" stop-color="#e4b488"/><stop offset=".4" stop-color="#d49e80"/><stop offset=".75" stop-color="#8c7a84"/><stop offset="1" stop-color="#928c98"/></linearGradient>
<radialGradient id="tdarksun" cx=".5" cy=".5" r=".5"><stop offset="0" stop-color="#fff2d2" stop-opacity="1"/><stop offset=".3" stop-color="#fff2d2" stop-opacity=".8"/><stop offset=".65" stop-color="#fff2d2" stop-opacity=".3"/><stop offset="1" stop-color="#fff2d2" stop-opacity="0"/></radialGradient>
<linearGradient id="tdarkfore" x1="0" y1="0" x2="0" y2="1"><stop offset="0" stop-color="#191e17"/><stop offset="1" stop-color="#141812"/></linearGradient>
</defs>
<rect width="251" height="168" fill="#141812"/>
<rect width="251" height="42" fill="url(#tdarksky)"/>
<ellipse cx="100" cy="13" rx="75" ry="17" fill="url(#tdarksun)"/>
<g filter="url(#b2)" fill="#a6807c" opacity=".7"><ellipse cx="50" cy="20" rx="50" ry="2.2"/><ellipse cx="28" cy="9" rx="28" ry="1.8"/><ellipse cx="212" cy="9" rx="36" ry="2"/></g>
<g filter="url(#b2)" fill="#80707e" opacity=".75"><ellipse cx="180" cy="26" rx="75" ry="2.8"/><ellipse cx="30" cy="30" rx="40" ry="2.4"/></g>
<path d="M0 39.5 C25 37 50 34 73 35 C100 36 120 37.5 150 37 C180 38 215 38.5 251 36 L251 70 L0 70Z" fill="#2a2e2a" filter="url(#b05)"/>
<path d="M0 47 C40 43 90 44 140 47 C180 49 215 44 251 42 L251 90 L0 90Z" fill="#1e231e" filter="url(#b2)"/>
<path d="M0 60 C40 55 90 60 140 64 C175 60 215 58 251 60 L251 168 L0 168Z" fill="url(#tdarkfore)"/>
<path d="M128 48 C170 43 215 41 251 40 L251 74 C214 68 172 66 128 62Z" fill="#333932" opacity=".8" filter="url(#b2)"/>
<ellipse cx="208" cy="68" rx="36" ry="5" fill="#20281c" filter="url(#b3)"/>
<ellipse cx="185" cy="100" rx="48" ry="10" fill="#1c2419" opacity=".7" filter="url(#b6)"/>
<path d="M20 60 C40 56 80 57 108 54 C124 52 136 56 138 62 C120 69 60 70 32 69 C22 67 18 63 20 60Z" fill="#141814" filter="url(#b2)"/>
<path d="M27 78 C30 88 60 92 84 96 M100 112 C92 118 90 124 104 130 C125 138 150 140 180 143" fill="none" stroke="#5e625c" stroke-width="1.5" stroke-linecap="round" filter="url(#b05)" opacity=".65"/>
<g fill="#0a0d0a">
<g filter="url(#b05)" opacity=".85"><path d="M30 74 h2.4 v9 h-2.4z M37 75 h2.4 v10 h-2.4z M44 76 h2.2 v10 h-2.2z M51 77 h2.2 v11 h-2.2z M58 78 h2.2 v11 h-2.2z M65 79 h2.2 v11 h-2.2z M72 80 h2.2 v11 h-2.2z M79 80 h2.2 v12 h-2.2z M86 81 h2.2 v12 h-2.2z M93 81 h2.2 v13 h-2.2z M100 82 h2.2 v13 h-2.2z M107 83 h2.2 v13 h-2.2z M114 84 h2.2 v13 h-2.2z M121 85 h2.2 v14 h-2.2z M128 86 h2.6 v15 h-2.6z"/>
<path d="M110 48 h2 v8 h-2z M116 47 h2 v9 h-2z M122 49 h2 v8 h-2z M128 51 h2 v7 h-2z"/></g>
<ellipse cx="80" cy="108" rx="1.8" ry="13"/><ellipse cx="87" cy="110" rx="2.4" ry="16"/><ellipse cx="94" cy="103" rx="1.8" ry="12"/>
<ellipse cx="100.5" cy="116" rx="2.2" ry="15"/><ellipse cx="106" cy="104" rx="2" ry="14"/><ellipse cx="112.5" cy="110" rx="2.2" ry="16"/><ellipse cx="118" cy="102" rx="1.8" ry="13"/>
<ellipse cx="125" cy="113" rx="2.1" ry="16"/><ellipse cx="131" cy="100" rx="2" ry="13"/><ellipse cx="136" cy="104" rx="2.8" ry="11"/>
<ellipse cx="140.5" cy="122" rx="1.9" ry="15"/><ellipse cx="163.5" cy="119" rx="2.3" ry="20"/>
<ellipse cx="186" cy="128" rx="2.2" ry="17"/><ellipse cx="192" cy="123" rx="2.1" ry="19"/><ellipse cx="224" cy="126" rx="3.3" ry="24"/>
</g>
</svg></div></div>
<!-- 3 tuscany mid -->
<div class="abs" style="left:646px;top:132px;width:159px;height:108.5px;border:1px solid #8e8e8e;background:#f4f4f4;padding:2.5px"><div style="width:100%;height:100%;background:#333"><svg width="100%" height="100%" viewBox="0 0 251 168" preserveAspectRatio="none" style="display:block">
<defs>
<linearGradient id="tmidsky" x1="0" y1="0" x2="0" y2="1"><stop offset="0" stop-color="#f4e8e6"/><stop offset=".4" stop-color="#efe0e0"/><stop offset=".75" stop-color="#c6bcc4"/><stop offset="1" stop-color="#b0b2ba"/></linearGradient>
<radialGradient id="tmidsun" cx=".5" cy=".5" r=".5"><stop offset="0" stop-color="#ffffff" stop-opacity="1"/><stop offset=".3" stop-color="#ffffff" stop-opacity=".8"/><stop offset=".65" stop-color="#ffffff" stop-opacity=".3"/><stop offset="1" stop-color="#ffffff" stop-opacity="0"/></radialGradient>
<linearGradient id="tmidfore" x1="0" y1="0" x2="0" y2="1"><stop offset="0" stop-color="#30412d"/><stop offset="1" stop-color="#283923"/></linearGradient>
</defs>
<rect width="251" height="168" fill="#283923"/>
<rect width="251" height="42" fill="url(#tmidsky)"/>
<ellipse cx="100" cy="13" rx="75" ry="17" fill="url(#tmidsun)"/>
<g filter="url(#b2)" fill="#e0d0d2" opacity=".7"><ellipse cx="50" cy="20" rx="50" ry="2.2"/><ellipse cx="28" cy="9" rx="28" ry="1.8"/><ellipse cx="212" cy="9" rx="36" ry="2"/></g>
<g filter="url(#b2)" fill="#c4bac4" opacity=".75"><ellipse cx="180" cy="26" rx="75" ry="2.8"/><ellipse cx="30" cy="30" rx="40" ry="2.4"/></g>
<path d="M0 39.5 C25 37 50 34 73 35 C100 36 120 37.5 150 37 C180 38 215 38.5 251 36 L251 70 L0 70Z" fill="#4d5c56" filter="url(#b05)"/>
<path d="M0 47 C40 43 90 44 140 47 C180 49 215 44 251 42 L251 90 L0 90Z" fill="#3a4a41" filter="url(#b2)"/>
<path d="M0 60 C40 55 90 60 140 64 C175 60 215 58 251 60 L251 168 L0 168Z" fill="url(#tmidfore)"/>
<path d="M128 48 C170 43 215 41 251 40 L251 74 C214 68 172 66 128 62Z" fill="#64736b" opacity=".8" filter="url(#b2)"/>
<ellipse cx="208" cy="68" rx="36" ry="5" fill="#425a37" filter="url(#b3)"/>
<ellipse cx="185" cy="100" rx="48" ry="10" fill="#38502f" opacity=".7" filter="url(#b6)"/>
<path d="M20 60 C40 56 80 57 108 54 C124 52 136 56 138 62 C120 69 60 70 32 69 C22 67 18 63 20 60Z" fill="#27302a" filter="url(#b2)"/>
<path d="M27 78 C30 88 60 92 84 96 M100 112 C92 118 90 124 104 130 C125 138 150 140 180 143" fill="none" stroke="#7f8a80" stroke-width="1.5" stroke-linecap="round" filter="url(#b05)" opacity=".7"/>
<g fill="#171f18">
<g filter="url(#b05)" opacity=".85"><path d="M30 74 h2.4 v9 h-2.4z M37 75 h2.4 v10 h-2.4z M44 76 h2.2 v10 h-2.2z M51 77 h2.2 v11 h-2.2z M58 78 h2.2 v11 h-2.2z M65 79 h2.2 v11 h-2.2z M72 80 h2.2 v11 h-2.2z M79 80 h2.2 v12 h-2.2z M86 81 h2.2 v12 h-2.2z M93 81 h2.2 v13 h-2.2z M100 82 h2.2 v13 h-2.2z M107 83 h2.2 v13 h-2.2z M114 84 h2.2 v13 h-2.2z M121 85 h2.2 v14 h-2.2z M128 86 h2.6 v15 h-2.6z"/>
<path d="M110 48 h2 v8 h-2z M116 47 h2 v9 h-2z M122 49 h2 v8 h-2z M128 51 h2 v7 h-2z"/></g>
<ellipse cx="80" cy="108" rx="1.8" ry="13"/><ellipse cx="87" cy="110" rx="2.4" ry="16"/><ellipse cx="94" cy="103" rx="1.8" ry="12"/>
<ellipse cx="100.5" cy="116" rx="2.2" ry="15"/><ellipse cx="106" cy="104" rx="2" ry="14"/><ellipse cx="112.5" cy="110" rx="2.2" ry="16"/><ellipse cx="118" cy="102" rx="1.8" ry="13"/>
<ellipse cx="125" cy="113" rx="2.1" ry="16"/><ellipse cx="131" cy="100" rx="2" ry="13"/><ellipse cx="136" cy="104" rx="2.8" ry="11"/>
<ellipse cx="140.5" cy="122" rx="1.9" ry="15"/><ellipse cx="163.5" cy="119" rx="2.3" ry="20"/>
<ellipse cx="186" cy="128" rx="2.2" ry="17"/><ellipse cx="192" cy="123" rx="2.1" ry="19"/><ellipse cx="224" cy="126" rx="3.3" ry="24"/>
</g>
</svg></div></div>
<svg class="abs" style="left:790.5px;top:138px" width="10" height="10"><circle cx="5" cy="5" r="3.9" fill="rgba(255,255,255,.65)" stroke="#777" stroke-width="1"/></svg>
<!-- 4 tuscany light -->
<div class="abs" style="left:816.5px;top:132px;width:160px;height:108.5px;border:1.5px solid #2a2a2a;background:#fff;padding:2px"><div style="width:100%;height:100%;border:1px solid #222;background:#333"><svg width="100%" height="100%" viewBox="0 0 251 168" preserveAspectRatio="none" style="display:block">
<defs>
<linearGradient id="tlightsky" x1="0" y1="0" x2="0" y2="1"><stop offset="0" stop-color="#f8f8f8"/><stop offset=".4" stop-color="#f6f5f5"/><stop offset=".75" stop-color="#eee9ea"/><stop offset="1" stop-color="#d2d6d8"/></linearGradient>
<radialGradient id="tlightsun" cx=".5" cy=".5" r=".5"><stop offset="0" stop-color="#ffffff" stop-opacity="1"/><stop offset=".3" stop-color="#ffffff" stop-opacity=".8"/><stop offset=".65" stop-color="#ffffff" stop-opacity=".3"/><stop offset="1" stop-color="#ffffff" stop-opacity="0"/></radialGradient>
<linearGradient id="tlightfore" x1="0" y1="0" x2="0" y2="1"><stop offset="0" stop-color="#47643f"/><stop offset="1" stop-color="#3f5c34"/></linearGradient>
</defs>
<rect width="251" height="168" fill="#3f5c34"/>
<rect width="251" height="42" fill="url(#tlightsky)"/>
<ellipse cx="100" cy="13" rx="75" ry="17" fill="url(#tlightsun)"/>
<g filter="url(#b2)" fill="#f4f2f2" opacity=".7"><ellipse cx="50" cy="20" rx="50" ry="2.2"/><ellipse cx="28" cy="9" rx="28" ry="1.8"/><ellipse cx="212" cy="9" rx="36" ry="2"/></g>
<g filter="url(#b2)" fill="#ece8ea" opacity=".75"><ellipse cx="180" cy="26" rx="75" ry="2.8"/><ellipse cx="30" cy="30" rx="40" ry="2.4"/></g>
<path d="M0 39.5 C25 37 50 34 73 35 C100 36 120 37.5 150 37 C180 38 215 38.5 251 36 L251 70 L0 70Z" fill="#62756c" filter="url(#b05)"/>
<path d="M0 47 C40 43 90 44 140 47 C180 49 215 44 251 42 L251 90 L0 90Z" fill="#52665a" filter="url(#b2)"/>
<path d="M0 60 C40 55 90 60 140 64 C175 60 215 58 251 60 L251 168 L0 168Z" fill="url(#tlightfore)"/>
<path d="M128 48 C170 43 215 41 251 40 L251 74 C214 68 172 66 128 62Z" fill="#7a8c83" opacity=".8" filter="url(#b2)"/>
<ellipse cx="208" cy="68" rx="36" ry="5" fill="#6a8a52" filter="url(#b3)"/>
<ellipse cx="185" cy="100" rx="48" ry="10" fill="#5a7c48" opacity=".7" filter="url(#b6)"/>
<path d="M20 60 C40 56 80 57 108 54 C124 52 136 56 138 62 C120 69 60 70 32 69 C22 67 18 63 20 60Z" fill="#3a463c" filter="url(#b2)"/>
<path d="M27 78 C30 88 60 92 84 96 M100 112 C92 118 90 124 104 130 C125 138 150 140 180 143" fill="none" stroke="#98a298" stroke-width="1.5" stroke-linecap="round" filter="url(#b05)" opacity=".7"/>
<g fill="#222e24">
<g filter="url(#b05)" opacity=".85"><path d="M30 74 h2.4 v9 h-2.4z M37 75 h2.4 v10 h-2.4z M44 76 h2.2 v10 h-2.2z M51 77 h2.2 v11 h-2.2z M58 78 h2.2 v11 h-2.2z M65 79 h2.2 v11 h-2.2z M72 80 h2.2 v11 h-2.2z M79 80 h2.2 v12 h-2.2z M86 81 h2.2 v12 h-2.2z M93 81 h2.2 v13 h-2.2z M100 82 h2.2 v13 h-2.2z M107 83 h2.2 v13 h-2.2z M114 84 h2.2 v13 h-2.2z M121 85 h2.2 v14 h-2.2z M128 86 h2.6 v15 h-2.6z"/>
<path d="M110 48 h2 v8 h-2z M116 47 h2 v9 h-2z M122 49 h2 v8 h-2z M128 51 h2 v7 h-2z"/></g>
<ellipse cx="80" cy="108" rx="1.8" ry="13"/><ellipse cx="87" cy="110" rx="2.4" ry="16"/><ellipse cx="94" cy="103" rx="1.8" ry="12"/>
<ellipse cx="100.5" cy="116" rx="2.2" ry="15"/><ellipse cx="106" cy="104" rx="2" ry="14"/><ellipse cx="112.5" cy="110" rx="2.2" ry="16"/><ellipse cx="118" cy="102" rx="1.8" ry="13"/>
<ellipse cx="125" cy="113" rx="2.1" ry="16"/><ellipse cx="131" cy="100" rx="2" ry="13"/><ellipse cx="136" cy="104" rx="2.8" ry="11"/>
<ellipse cx="140.5" cy="122" rx="1.9" ry="15"/><ellipse cx="163.5" cy="119" rx="2.3" ry="20"/>
<ellipse cx="186" cy="128" rx="2.2" ry="17"/><ellipse cx="192" cy="123" rx="2.1" ry="19"/><ellipse cx="224" cy="126" rx="3.3" ry="24"/>
</g>
</svg></div></div>
<!-- 5 portrait -->
<div class="abs" style="left:1015.5px;top:109.5px;width:104px;height:154.5px;border:1px solid #111;background:#456"><svg width="102" height="152.5"><use href="#portrait" width="102" height="152.5"/></svg></div>
<!-- 6 kids -->
<div class="abs" style="left:306px;top:352px;width:155px;height:103.5px;border:1px solid #111;background:#585"><svg width="153" height="101.5"><use href="#kids" width="153" height="101.5"/></svg></div>
<!-- 7 soldier -->
<div class="abs" style="left:476.8px;top:352px;width:155.5px;height:103.5px;border:1px solid #111;background:#8a8"><svg width="153.5" height="101.5"><use href="#soldier" width="153.5" height="101.5"/></svg></div>
<!-- badges -->
<svg class="abs" style="left:439px;top:227px" width="21" height="10.5" viewBox="0 0 21 10.5"><rect x=".5" y=".5" width="9.5" height="9.5" fill="#050505" stroke="#6e6e6e" stroke-width=".9" rx="1.2"/><rect x="11" y=".5" width="9.5" height="9.5" fill="#050505" stroke="#6e6e6e" stroke-width=".9" rx="1.2"/><rect x="3" y="3.6" width="5" height="3.6" rx="1" fill="none" stroke="#bbb" stroke-width=".8"/><path d="M12.6 8.8 L19 2 L19 8.8Z" fill="#c4c4c4"/><path d="M13 3.4 h2.6 M14.3 2.1 v2.6" stroke="#c4c4c4" stroke-width=".7"/></svg>
<svg class="abs" style="left:619.5px;top:226.5px" width="10.5" height="10.5" viewBox="0 0 10.5 10.5"><rect x=".5" y=".5" width="9.5" height="9.5" fill="#050505" stroke="#8a8a8a" stroke-width=".9" rx="1.2"/><path d="M3 3 h4.6 v3 h-1.6 l-.7 1.6 l-.7 -1.6 h-1.6z" fill="#c4c4c4"/></svg>
<svg class="abs" style="left:1106.5px;top:251.5px" width="10.5" height="10.5" viewBox="0 0 10.5 10.5"><rect x=".5" y=".5" width="9.5" height="9.5" fill="#050505" stroke="#6e6e6e" stroke-width=".9" rx="1.2"/><path d="M2 8.8 L8.6 2 L8.6 8.8Z" fill="#c4c4c4"/><path d="M2.2 3.4 h2.6 M3.5 2.1 v2.6" stroke="#c4c4c4" stroke-width=".7"/></svg>
<svg class="abs" style="left:449px;top:443.5px" width="10.5" height="10.5" viewBox="0 0 10.5 10.5"><rect x=".5" y=".5" width="9.5" height="9.5" fill="#050505" stroke="#6e6e6e" stroke-width=".9" rx="1.2"/><path d="M2 8.8 L8.6 2 L8.6 8.8Z" fill="#c4c4c4"/><path d="M2.2 3.4 h2.6 M3.5 2.1 v2.6" stroke="#c4c4c4" stroke-width=".7"/></svg>
<svg class="abs" style="left:609.5px;top:443.5px" width="21" height="10.5" viewBox="0 0 21 10.5"><rect x=".5" y=".5" width="9.5" height="9.5" fill="#050505" stroke="#6e6e6e" stroke-width=".9" rx="1.2"/><rect x="11" y=".5" width="9.5" height="9.5" fill="#050505" stroke="#6e6e6e" stroke-width=".9" rx="1.2"/><rect x="3" y="3" width="4.6" height="4.6" fill="none" stroke="#bbb" stroke-width=".8"/><path d="M12.6 8.8 L19 2 L19 8.8Z" fill="#c4c4c4"/><path d="M13 3.4 h2.6 M14.3 2.1 v2.6" stroke="#c4c4c4" stroke-width=".7"/></svg>
<!-- flag + stack arrow in cell 3 -->
<svg class="abs" style="left:643px;top:103px" width="10" height="13" viewBox="0 0 10 13"><rect x=".2" y=".2" width="1.5" height="12.1" fill="#9a9a9a"/><rect x=".2" y=".9" width="8.4" height="6.2" fill="#979797"/></svg>
<svg class="abs" style="left:643.4px;top:274.6px" width="13" height="13" viewBox="0 0 13 13"><path d="M1.9 1 V4.4 C1.9 7.2 3.8 8.1 6 8.1 H7.6" fill="none" stroke="#505050" stroke-width="2.3" stroke-linecap="round"/><path d="M7.2 4.5 L11.4 8.1 L7.2 11.7Z" fill="#505050"/></svg>
<!-- ===== right panel ===== -->
<div class="abs" style="left:1166px;top:43px;width:235px;height:743.5px;background:#2a2a2a"></div>
<div class="abs" style="left:1401px;top:43px;width:21px;height:757px;background:#000"></div>
<div class="abs" style="left:1402px;top:755px;width:7px;height:31.5px;background:#181818"></div>
<div class="abs" style="left:1170px;top:140px;width:227px;height:36.5px;background:#494949;border:1px solid #1f1f1f"></div>
<div class="abs" style="left:1166px;top:179.5px;width:235px;height:1.5px;background:#141414"></div>
<div class="t" style="left:1176px;top:145px;font-size:9.1px;color:#a9a9a9;transform:scaleX(.89)">ISO 64</div>
<div class="t" style="left:1245px;top:145px;font-size:9.1px;color:#a9a9a9;transform:scaleX(.89)">57 mm</div>
<div class="t" style="left:1301px;top:145px;font-size:9.1px;color:#a9a9a9;transform:scaleX(.89)"><i style="font-family:'Liberation Serif'">f</i> / 11</div>
<div class="tr" style="right:33px;top:145px;font-size:9.1px;color:#a9a9a9;transform:scaleX(.89)">⅛ s</div>
<svg class="abs" style="left:1175px;top:161px" width="11" height="8"><rect x=".7" y=".7" width="9.4" height="6.2" rx=".8" fill="none" stroke="#b4b4b4" stroke-width="1"/></svg>
<div class="t" style="left:1187.5px;top:160.3px;font-size:9.5px;color:#c2c2c2">3</div>
<svg class="abs" style="left:1231px;top:161px" width="11" height="8"><rect x=".7" y=".7" width="9.4" height="6.2" rx=".8" fill="#565656" stroke="#606060" stroke-width="1"/></svg>
<div class="t" style="left:1243.5px;top:160.3px;font-size:9.5px;color:#6e6e6e">0</div>
<svg class="abs" style="left:1286px;top:161px" width="11" height="8"><rect x=".7" y=".7" width="9.4" height="6.2" rx=".8" fill="#565656" stroke="#606060" stroke-width="1"/></svg>
<div class="t" style="left:1298.5px;top:160.3px;font-size:9.5px;color:#6e6e6e">0</div>
<svg class="abs" style="left:1341px;top:161px" width="11" height="8"><rect x=".7" y=".7" width="9.4" height="6.2" rx=".8" fill="#565656" stroke="#606060" stroke-width="1"/></svg>
<div class="t" style="left:1353.5px;top:160.3px;font-size:9.5px;color:#6e6e6e">0</div>
<div class="abs" style="left:1170px;top:182px;width:227px;height:573px;background:#484848;border:1px solid #222;overflow:hidden"></div>
<div class="abs" style="left:1171px;top:198.7px;width:225px;height:1px;background:#4c4c4c"></div>
<svg class="abs" style="left:1184px;top:188.0px" width="7" height="7"><path d="M.6 .4 L6.4 3.5 L.6 6.6Z" fill="#8e8e8e"/></svg>
<div class="t kw" style="left:1196.5px;top:186.8px">Alpes</div>
<div class="tr kn" style="right:37.5px;top:186.8px">2</div>
<div class="abs" style="left:1171px;top:213.5px;width:225px;height:1px;background:#4c4c4c"></div>
<svg class="abs" style="left:1184px;top:202.8px" width="7" height="7"><path d="M.6 .4 L6.4 3.5 L.6 6.6Z" fill="#8e8e8e"/></svg>
<div class="t kw" style="left:1196.5px;top:201.6px">Amerrissage</div>
<div class="tr kn" style="right:37.5px;top:201.6px">1</div>
<div class="abs" style="left:1171px;top:228.3px;width:225px;height:1px;background:#4c4c4c"></div>
<svg class="abs" style="left:1184px;top:217.6px" width="7" height="7"><path d="M.6 .4 L6.4 3.5 L.6 6.6Z" fill="#8e8e8e"/></svg>
<div class="t kw" style="left:1196.5px;top:216.4px">analyse libre</div>
<div class="tr kn" style="right:37.5px;top:216.4px">1</div>
<div class="abs" style="left:1171px;top:243.1px;width:225px;height:1px;background:#4c4c4c"></div>
<svg class="abs" style="left:1184px;top:232.4px" width="7" height="7"><path d="M.6 .4 L6.4 3.5 L.6 6.6Z" fill="#8e8e8e"/></svg>
<div class="t kw" style="left:1196.5px;top:231.2px">ancient</div>
<div class="tr kn" style="right:37.5px;top:231.2px">1</div>
<div class="abs" style="left:1171px;top:257.9px;width:225px;height:1px;background:#4c4c4c"></div>
<svg class="abs" style="left:1184px;top:247.2px" width="7" height="7"><path d="M.6 .4 L6.4 3.5 L.6 6.6Z" fill="#8e8e8e"/></svg>
<div class="t kw" style="left:1196.5px;top:246.0px">animal</div>
<div class="tr kn" style="right:37.5px;top:246.0px">1</div>
<div class="abs" style="left:1171px;top:272.8px;width:225px;height:1px;background:#4c4c4c"></div>
<svg class="abs" style="left:1184px;top:262.1px" width="7" height="7"><path d="M.6 .4 L6.4 3.5 L.6 6.6Z" fill="#8e8e8e"/></svg>
<div class="t kw" style="left:1196.5px;top:260.8px">Animalia</div>
<div class="tr kn" style="right:37.5px;top:260.8px">1</div>
<div class="abs" style="left:1171px;top:287.6px;width:225px;height:1px;background:#4c4c4c"></div>
<svg class="abs" style="left:1184px;top:276.9px" width="7" height="7"><path d="M.6 .4 L6.4 3.5 L.6 6.6Z" fill="#8e8e8e"/></svg>
<div class="t kw" style="left:1196.5px;top:275.6px">Animalia (Animaux)</div>
<div class="tr kn" style="right:37.5px;top:275.6px">2</div>
<div class="abs" style="left:1171px;top:302.4px;width:225px;height:1px;background:#4c4c4c"></div>
<svg class="abs" style="left:1184px;top:291.7px" width="7" height="7"><path d="M.6 .4 L6.4 3.5 L.6 6.6Z" fill="#e8e8e8"/></svg>
<div class="t kw" style="left:1196.5px;top:290.4px">ANIMAUX</div>
<div class="tr kn" style="right:37.5px;top:290.4px">2</div>
<div class="abs" style="left:1171px;top:317.2px;width:225px;height:1px;background:#4c4c4c"></div>
<svg class="abs" style="left:1184px;top:306.5px" width="7" height="7"><path d="M.6 .4 L6.4 3.5 L.6 6.6Z" fill="#8e8e8e"/></svg>
<div class="t kw" style="left:1196.5px;top:305.2px">antique</div>
<div class="tr kn" style="right:37.5px;top:305.2px">1</div>
<div class="abs" style="left:1171px;top:332.0px;width:225px;height:1px;background:#4c4c4c"></div>
<svg class="abs" style="left:1184px;top:321.3px" width="7" height="7"><path d="M.6 .4 L6.4 3.5 L.6 6.6Z" fill="#8e8e8e"/></svg>
<div class="t kw" style="left:1196.5px;top:320.0px">Anvers</div>
<div class="tr kn" style="right:37.5px;top:320.0px">3</div>
<div class="abs" style="left:1171px;top:346.8px;width:225px;height:1px;background:#4c4c4c"></div>
<svg class="abs" style="left:1184px;top:336.1px" width="7" height="7"><path d="M.6 .4 L6.4 3.5 L.6 6.6Z" fill="#8e8e8e"/></svg>
<div class="t kw" style="left:1196.5px;top:334.9px">arbre</div>
<div class="tr kn" style="right:37.5px;top:334.9px">2</div>
<div class="abs" style="left:1171px;top:361.6px;width:225px;height:1px;background:#4c4c4c"></div>
<svg class="abs" style="left:1184px;top:350.9px" width="7" height="7"><path d="M.6 .4 L6.4 3.5 L.6 6.6Z" fill="#8e8e8e"/></svg>
<div class="t kw" style="left:1196.5px;top:349.7px">architecture</div>
<div class="tr kn" style="right:37.5px;top:349.7px">1</div>
<div class="abs" style="left:1171px;top:376.4px;width:225px;height:1px;background:#4c4c4c"></div>
<svg class="abs" style="left:1184px;top:365.7px" width="7" height="7"><path d="M.6 .4 L6.4 3.5 L.6 6.6Z" fill="#e8e8e8"/></svg>
<div class="t kw" style="left:1196.5px;top:364.5px">Ardèche</div>
<div class="tr kn" style="right:37.5px;top:364.5px">1</div>
<div class="abs" style="left:1171px;top:391.2px;width:225px;height:1px;background:#4c4c4c"></div>
<div class="tr kn" style="right:37.5px;top:379.3px">1</div>
<div class="abs" style="left:1171px;top:406.0px;width:225px;height:1px;background:#4c4c4c"></div>
<div class="tr kn" style="right:37.5px;top:394.1px">1</div>
<div class="abs" style="left:1171px;top:420.8px;width:225px;height:1px;background:#4c4c4c"></div>
<div class="tr kn" style="right:37.5px;top:408.9px">2</div>
<div class="abs" style="left:1171px;top:435.7px;width:225px;height:1px;background:#4c4c4c"></div>
<div class="tr kn" style="right:37.5px;top:423.7px">0</div>
<div class="abs" style="left:1171px;top:450.5px;width:225px;height:1px;background:#4c4c4c"></div>
<div class="tr kn" style="right:37.5px;top:438.5px">1</div>
<div class="abs" style="left:1171px;top:465.3px;width:225px;height:1px;background:#4c4c4c"></div>
<div class="abs" style="left:1171px;top:480.1px;width:225px;height:1px;background:#4c4c4c"></div>
<div class="tr kn" style="right:37.5px;top:468.1px">1</div>
<div class="abs" style="left:1171px;top:494.9px;width:225px;height:1px;background:#4c4c4c"></div>
<div class="tr kn" style="right:37.5px;top:482.9px">1</div>
<div class="abs" style="left:1171px;top:509.7px;width:225px;height:1px;background:#4c4c4c"></div>
<div class="tr kn" style="right:37.5px;top:497.8px">1</div>
<div class="abs" style="left:1171px;top:524.5px;width:225px;height:1px;background:#4c4c4c"></div>
<div class="tr kn" style="right:37.5px;top:512.6px">1</div>
<div class="abs" style="left:1171px;top:539.3px;width:225px;height:1px;background:#4c4c4c"></div>
<div class="tr kn" style="right:37.5px;top:527.4px">1</div>
<div class="abs" style="left:1171px;top:554.1px;width:225px;height:1px;background:#4c4c4c"></div>
<div class="tr kn" style="right:37.5px;top:542.2px">1</div>
<div class="abs" style="left:1171px;top:569.0px;width:225px;height:1px;background:#4c4c4c"></div>
<div class="abs" style="left:1171px;top:583.8px;width:225px;height:1px;background:#4c4c4c"></div>
<div class="tr kn" style="right:37.5px;top:571.8px">1</div>
<div class="abs" style="left:1171px;top:598.6px;width:225px;height:1px;background:#4c4c4c"></div>
<div class="tr kn" style="right:37.5px;top:586.6px">2</div>
<div class="abs" style="left:1171px;top:613.4px;width:225px;height:1px;background:#4c4c4c"></div>
<div class="tr kn" style="right:37.5px;top:601.4px">1</div>
<div class="abs" style="left:1171px;top:628.2px;width:225px;height:1px;background:#4c4c4c"></div>
<div class="tr kn" style="right:37.5px;top:616.2px">2</div>
<div class="abs" style="left:1171px;top:643.0px;width:225px;height:1px;background:#4c4c4c"></div>
<div class="tr kn" style="right:37.5px;top:631.0px">19</div>
<div class="abs" style="left:1171px;top:657.8px;width:225px;height:1px;background:#4c4c4c"></div>
<svg class="abs" style="left:1184px;top:647.1px" width="7" height="7"><path d="M.6 .4 L6.4 3.5 L.6 6.6Z" fill="#8e8e8e"/></svg>
<div class="t kw" style="left:1196.5px;top:645.9px">biarritz</div>
<div class="tr kn" style="right:37.5px;top:645.9px">1</div>
<div class="abs" style="left:1171px;top:672.6px;width:225px;height:1px;background:#4c4c4c"></div>
<svg class="abs" style="left:1184px;top:661.9px" width="7" height="7"><path d="M.6 .4 L6.4 3.5 L.6 6.6Z" fill="#8e8e8e"/></svg>
<div class="t kw" style="left:1196.5px;top:660.7px">Birmanie 2020</div>
<div class="tr kn" style="right:37.5px;top:660.7px">0</div>
<div class="abs" style="left:1171px;top:687.4px;width:225px;height:1px;background:#4c4c4c"></div>
<svg class="abs" style="left:1184px;top:676.7px" width="7" height="7"><path d="M.6 .4 L6.4 3.5 L.6 6.6Z" fill="#8e8e8e"/></svg>
<div class="t kw" style="left:1196.5px;top:675.5px">Blanchisserie</div>
<div class="tr kn" style="right:37.5px;top:675.5px">1</div>
<div class="abs" style="left:1171px;top:702.2px;width:225px;height:1px;background:#4c4c4c"></div>
<svg class="abs" style="left:1184px;top:691.5px" width="7" height="7"><path d="M.6 .4 L6.4 3.5 L.6 6.6Z" fill="#8e8e8e"/></svg>
<div class="t kw" style="left:1196.5px;top:690.3px">blank</div>
<div class="tr kn" style="right:37.5px;top:690.3px">1</div>
<div class="abs" style="left:1171px;top:717.1px;width:225px;height:1px;background:#4c4c4c"></div>
<svg class="abs" style="left:1184px;top:706.4px" width="7" height="7"><path d="M.6 .4 L6.4 3.5 L.6 6.6Z" fill="#8e8e8e"/></svg>
<div class="t kw" style="left:1196.5px;top:705.1px">Blankernberge</div>
<div class="tr kn" style="right:37.5px;top:705.1px">1</div>
<div class="abs" style="left:1171px;top:731.9px;width:225px;height:1px;background:#4c4c4c"></div>
<svg class="abs" style="left:1184px;top:721.2px" width="7" height="7"><path d="M.6 .4 L6.4 3.5 L.6 6.6Z" fill="#8e8e8e"/></svg>
<div class="t kw" style="left:1196.5px;top:719.9px">blending</div>
<div class="tr kn" style="right:37.5px;top:719.9px">0</div>
<div class="abs" style="left:1171px;top:746.7px;width:225px;height:1px;background:#4c4c4c"></div>
<svg class="abs" style="left:1184px;top:736.0px" width="7" height="7"><path d="M.6 .4 L6.4 3.5 L.6 6.6Z" fill="#8e8e8e"/></svg>
<div class="t kw" style="left:1196.5px;top:734.7px">bleu</div>
<div class="tr kn" style="right:37.5px;top:734.7px">1</div>
<div class="abs" style="left:1171px;top:747.3px;width:225px;height:7.2px;overflow:hidden"><svg class="abs" style="left:13px;top:3.5px" width="7" height="7"><path d="M.6 .4 L6.4 3.5 L.6 6.6Z" fill="#8e8e8e"/></svg><div class="t kw" style="left:25.5px;top:2.25px">Bleuet</div><div class="tr kn" style="right:12px;top:2.25px">1</div></div>
<div class="abs" style="left:1402.5px;top:223px;width:5.5px;height:43px;border-radius:3px;background:#a9a9a9"></div>
<div class="abs" style="left:1402px;top:140px;width:6.5px;height:36px;background:#2a2a2a"></div>
<svg class="abs" style="left:1278.5px;top:757px" width="7" height="4"><path d="M.5 .5 L6.5 .5 L3.5 3.5Z" fill="#666"/></svg>
<div class="btn" style="left:1170px;top:763px;width:110px"></div>
<div class="btn" style="left:1285px;top:763px;width:111px"></div>
<div class="abs" style="left:1184.5px;top:764px;width:1px;height:16px;background:#2c2c2c"></div>
<div class="abs" style="left:1174px;top:767px;width:6.5px;height:10px;background:#222;border-radius:1px"><div style="position:absolute;left:1px;right:1px;bottom:1px;height:4px;background:#a8a8a8"></div></div>
<div class="t" style="left:1206px;top:767.3px;font-size:9.8px;color:#cfcfcf;transform:scaleX(.955)">Synchroniser</div>
<div class="t" style="left:1312px;top:767.3px;font-size:9.8px;color:#cfcfcf;transform:scaleX(.955)">Synch. param.</div>
<div class="abs" style="left:1410px;top:43px;width:1px;height:743px;background:#1c1c1c"></div>
<svg class="abs" style="left:1413.5px;top:410.5px" width="6" height="10"><path d="M0.4 0.6 L5.4 4.8 L0.4 9Z" fill="#5e5e5e"/></svg>
<!-- ===== webcam overlay ===== -->
<svg class="abs" style="left:1166px;top:0" width="256" height="144" viewBox="0 0 256 144">
  <defs>
    <linearGradient id="wwall" x1="0" y1="0" x2="1" y2="0"><stop offset="0" stop-color="#e7e3db"/><stop offset=".5" stop-color="#e3dfd7"/><stop offset=".53" stop-color="#c9c5bc"/><stop offset=".545" stop-color="#dedad2"/><stop offset=".68" stop-color="#dad6ce"/><stop offset=".7" stop-color="#cfccc5"/><stop offset="1" stop-color="#cbc8c2"/></linearGradient>
    <linearGradient id="wpaint" x1="0" y1="0" x2="0.15" y2="1"><stop offset="0" stop-color="#8794a4"/><stop offset=".22" stop-color="#a9aaa0"/><stop offset=".4" stop-color="#b89060"/><stop offset=".58" stop-color="#bb7c3a"/><stop offset=".78" stop-color="#8a5428"/><stop offset="1" stop-color="#4c3622"/></linearGradient>
    <linearGradient id="wshirt" x1="0" y1="0" x2="1" y2="1"><stop offset="0" stop-color="#444876"/><stop offset="1" stop-color="#373a62"/></linearGradient>
    <radialGradient id="wface" cx=".45" cy=".45" r=".6"><stop offset="0" stop-color="#dba68e"/><stop offset=".7" stop-color="#cc9880"/><stop offset="1" stop-color="#b5826c"/></radialGradient>
    <clipPath id="wclip"><rect width="256" height="144"/></clipPath>
    <filter id="wb" filterUnits="userSpaceOnUse" x="-10" y="-10" width="276" height="164"><feGaussianBlur stdDeviation=".55"/></filter>
  </defs>
  <g clip-path="url(#wclip)"><g filter="url(#wb)">
    <rect x="-5" y="-5" width="266" height="154" fill="url(#wwall)"/>
    <rect x="63.5" y="-5" width="1" height="60" fill="#d6d2ca"/>
    <!-- painting -->
    <path d="M175.5 44 L258 29.5 L258 90.5 L172 85.5Z" fill="url(#wpaint)"/>
    <path d="M176 50 C200 40 230 44 258 34 L258 44 C230 52 200 50 176 58Z" fill="#cfd4d8" opacity=".55" filter="url(#b2)"/>
    <path d="M176 66 C200 56 232 62 258 50 L258 62 C230 72 200 64 176 74Z" fill="#d0a868" opacity=".85" filter="url(#b2)"/>
    <path d="M196 74 C220 64 240 70 258 64 L258 82 L196 83Z" fill="#8a4c22" opacity=".8" filter="url(#b2)"/>
    <path d="M176 74 C190 70 200 72 210 76 L210 84 L174 84Z" fill="#5c4028" opacity=".8" filter="url(#b2)"/>
    <rect x="163" y="74" width="12" height="1.2" fill="#9a968e"/>
    <!-- printer -->
    <path d="M164.7 88 L235.8 89 L235.8 108 L244 109 L244 146 L165 146Z" fill="#1a1919"/>
    <path d="M165 88 L235.8 89 L235.8 93 L165 92Z" fill="#363433"/>
    <path d="M166 108 L236 109.5" stroke="#2e2c2c" stroke-width="1.4"/>
    <path d="M172 112 L232 113 L232 132 L172 132Z" fill="#111"/>
    <!-- chair -->
    <path d="M54 45 C56 34 64 32.5 72 32.5 C80 32.5 86 35 88 45Z" fill="#343234"/>
    <path d="M46 44 C52 39 92 39 97 44 L99 60 L97 77 L58 80 L49 70 L45 56Z" fill="#171517"/>
    <path d="M22 74 C30 64 44 64 50 68 L56 84 L48 100 L44 126 L20 128 C12 112 13 88 22 74Z" fill="#2a1e1f"/>
    <path d="M35.5 88 C38 80 46 78 48 82 L46 92 L38 94Z" fill="#d9d5cd"/>
    <path d="M15 92 C18 80 24 72 30 70 L26 100 L24 124 L19 124 C15 114 14 102 15 92Z" fill="#171314"/>
    <text x="60" y="65" font-family="Liberation Sans" font-size="5.4" fill="#c2203c" font-weight="bold" textLength="37" lengthAdjust="spacingAndGlyphs">@noblechairs</text>
    <path d="M-2 128 L10.8 129 L10.8 146 L-2 146Z" fill="#232121"/>
    <!-- arms -->
    <path d="M19 146 L22 136 L34 132 L46 138 L46 146Z" fill="#cf9e86"/>
    <path d="M160 136 L171 137 L173 146 L158 146Z" fill="#cf9e86"/>
    <!-- t-shirt -->
    <path d="M21.6 137 C24 124 28 114 32.4 108 C38 94 44 84 52 79 L95 69 L135 79 L158.4 86.4 C166 100 169 120 171 137 L171 146 L22 146Z" fill="url(#wshirt)"/>
    <path d="M40 100 C46 92 52 86 60 84 L56 110 L40 130Z" fill="#4a4e80" opacity=".7" filter="url(#b2)"/>
    <path d="M79 107 L126 106 L128 146 L80 146Z" fill="#7f8eaa" filter="url(#b1)"/>
    <path d="M84 112 L100 110 L110 124 L96 140 L84 134Z" fill="#9fb0c8" opacity=".7" filter="url(#b1)"/>
    <!-- neck -->
    <path d="M99 66 L135 66 L134 80 L126 100 C122 104 118 100 112 92 L100 78Z" fill="#c18e76"/>
    <!-- head -->
    <path d="M97.5 42 C97 22 108 12 122 12 C138 12 146 24 145 44 C144.5 62 137 80 122 81.5 C108 81 98.5 62 97.5 42Z" fill="url(#wface)"/>
    <path d="M97.5 46 C93 22 108 9.5 124 10.4 C142 11 151 26 146.5 48 C145 36 140 27 132 24 C124 21 112 22 104 28 C99.5 33 98.5 40 97.5 46Z" fill="#3f2f26"/>
    <path d="M102 60 C105 74 114 82 122 82 C131 81.5 138 74 141 60 C136 70 130 74 122 74 C114 74 106 68 102 60Z" fill="#8e6450" opacity=".8" filter="url(#b1)"/>
    <ellipse cx="116" cy="65.8" rx="7" ry="2.6" fill="#6e3a34"/>
    <ellipse cx="116" cy="61.5" rx="8" ry="1.6" fill="#7a5444" opacity=".8"/>
    <ellipse cx="108" cy="54" rx="5" ry="4" fill="#d98f80" opacity=".55" filter="url(#b1)"/>
    <ellipse cx="134" cy="55" rx="4.5" ry="4" fill="#d98f80" opacity=".5" filter="url(#b1)"/>
    <path d="M99 43.5 L143 45.5" stroke="#3c3330" stroke-width="1.1"/>
    <rect x="100" y="40" width="17" height="8.4" rx="3" fill="none" stroke="#3c3330" stroke-width="1.1"/>
    <rect x="123" y="41" width="17" height="8.4" rx="3" fill="none" stroke="#3c3330" stroke-width="1.1"/>
    <ellipse cx="108.5" cy="44" rx="3" ry="1.2" fill="#4a3a34"/><ellipse cx="131.5" cy="45" rx="3" ry="1.2" fill="#4a3a34"/>
    <path d="M142 44 C147 42 148 50 144 56Z" fill="#c48e78"/>
    <!-- hands -->
    <path d="M63 146 C64 134 74 124 88 116 C96 110 104 108 106 111 C107 114 100 118 96 122 C104 120 116 122 118 126 C119 130 112 134 106 136 C112 137 118 140 117 146Z" fill="#d6a88e"/>
    <path d="M116 146 C114 134 118 122 122 114 C124 104 128 95 131 94 C135 94 134 104 133 110 C136 102 140 97 143 98 C147 100 144 110 143 116 C148 112 152 114 152 120 C153 130 152 138 146 146Z" fill="#d4a48a"/>
    <path d="M96 122 C102 126 110 127 118 126 M106 136 C100 137 94 136 90 134" stroke="#b88870" stroke-width=".9" fill="none"/>
    <path d="M149.4 136 L160 138 L160 146 L148 146Z" fill="#1e1a1a"/>
    <path d="M124 96 L124.5 104" stroke="#222" stroke-width="1.4"/>
  </g></g>
</svg>
<!-- ===== context menu ===== -->
<div class="menu" id="cm" style="left:724.5px;top:188px;width:293.5px;height:606.5px;background:radial-gradient(ellipse 110px 34px at 203px 20px,rgba(178,208,168,.42),rgba(178,208,168,0) 100%),radial-gradient(ellipse 120px 40px at 40px 26px,rgba(190,204,186,.5),rgba(190,204,186,0) 100%),linear-gradient(#d3d7d1 0px,#d2d5d0 60px,#cfcfcf 100px,#cdcdcd 112px,#c6c6c6 300px,#c2c2c2 460px,#c2c2c2 100%)">
<div class="mi" style="top:5.1px">Ouvrir en mode Loupe</div>
<div class="mi" style="top:22.1px">Ouvrir en mode Comparaison</div>
<div class="mi" style="top:39.1px">Ouvrir en mode Ensemble</div>
<div class="ms" style="top:58.5px"></div>
<div class="mi" style="top:64.4px">Ouvrir dans la vue de référence</div>
<div class="mi" style="top:81.3px">Définir comme photo de référence</div>
<div class="ms" style="top:100.8px"></div>
<div class="mi" style="top:106.4px">Verrouiller sur le second moniteur</div>
<svg class="abs" style="left:251px;top:109.6px" width="33" height="11" viewBox="0 0 33 11" fill="none" stroke="#9a9a9a" stroke-width="1.05" stroke-linejoin="round" stroke-linecap="round"><path d="M5 1.2 L9.2 5.6 H7 V9.6 H3 V5.6 H0.8Z"/><path d="M13.6 3.9 h3 v3 h-3z M13.6 3.9 H12.7 A1.25 1.25 0 1 1 13.6 2.9Z M16.6 3.9 V2.9 A1.25 1.25 0 1 1 17.6 3.9Z M16.6 6.9 H17.6 A1.25 1.25 0 1 1 16.6 7.9Z M13.6 6.9 V7.9 A1.25 1.25 0 1 1 12.7 6.9Z"/><path d="M31.6 2 V4.6 C31.6 6 30.8 6.6 29.6 6.6 H23.4 M25.8 4 L23.2 6.6 L25.8 9.2"/></svg>
<div class="ms" style="top:126.0px"></div>
<div class="mi d" style="top:131.7px">Afficher dans le Finder</div>
<div class="mi" style="top:148.7px">Atteindre le dossier de la bibliothèque</div>
<div class="mi" style="top:165.7px">Atteindre la collection</div>
<svg class="chev" style="top:168.6px" viewBox="0 0 6 10"><path d="M1.2 1.4 L4.8 5 L1.2 8.6" fill="none" stroke="#2a2a2a" stroke-width="1.6" stroke-linecap="round" stroke-linejoin="round"/></svg>
<div class="ms" style="top:185.3px"></div>
<div class="abs" style="left:3.5px;right:3.5px;top:190.6px;height:16px;border-radius:3.5px;background:#aeaeae"></div>
<div class="mi" style="top:190.7px">Modifier dans</div>
<svg class="chev" style="top:193.6px" viewBox="0 0 6 10"><path d="M1.2 1.4 L4.8 5 L1.2 8.6" fill="none" stroke="#2a2a2a" stroke-width="1.6" stroke-linecap="round" stroke-linejoin="round"/></svg>
<div class="mi" style="top:207.8px">Fusion de photos</div>
<svg class="chev" style="top:210.7px" viewBox="0 0 6 10"><path d="M1.2 1.4 L4.8 5 L1.2 8.6" fill="none" stroke="#2a2a2a" stroke-width="1.6" stroke-linecap="round" stroke-linejoin="round"/></svg>
<div class="mi" style="top:224.9px">Accentuer...</div>
<svg class="abs" style="left:251px;top:228.1px" width="33" height="11" viewBox="0 0 33 11" fill="none" stroke="#9a9a9a" stroke-width="1.05" stroke-linejoin="round" stroke-linecap="round"><path d="M1.2 5.2 L4 2.2 L6.8 5.2"/><path d="M9.6 2.6 H12.4 L15.4 8.8 H18.4 M15.4 2.6 H18.4"/><path d="M26.6 2.4 V8.8"/></svg>
<div class="ms" style="top:244.7px"></div>
<div class="mi" style="top:249.9px">Définir le marqueur</div>
<svg class="chev" style="top:252.8px" viewBox="0 0 6 10"><path d="M1.2 1.4 L4.8 5 L1.2 8.6" fill="none" stroke="#2a2a2a" stroke-width="1.6" stroke-linecap="round" stroke-linejoin="round"/></svg>
<div class="mi" style="top:267.0px">Définir la note</div>
<svg class="chev" style="top:269.9px" viewBox="0 0 6 10"><path d="M1.2 1.4 L4.8 5 L1.2 8.6" fill="none" stroke="#2a2a2a" stroke-width="1.6" stroke-linecap="round" stroke-linejoin="round"/></svg>
<div class="mi" style="top:284.0px">Définir les libellés de couleur</div>
<svg class="chev" style="top:286.9px" viewBox="0 0 6 10"><path d="M1.2 1.4 L4.8 5 L1.2 8.6" fill="none" stroke="#2a2a2a" stroke-width="1.6" stroke-linecap="round" stroke-linejoin="round"/></svg>
<div class="mi d" style="top:301.1px">Ajouter un mot-clé de raccourci</div>
<div class="ms" style="top:320.8px"></div>
<div class="mi" style="top:326.1px">Ajouter à la collection rapide</div>
<div class="sc" style="top:326.1px">B</div>
<div class="ms" style="top:345.8px"></div>
<div class="mi" style="top:351.3px">Empilement</div>
<svg class="chev" style="top:354.2px" viewBox="0 0 6 10"><path d="M1.2 1.4 L4.8 5 L1.2 8.6" fill="none" stroke="#2a2a2a" stroke-width="1.6" stroke-linecap="round" stroke-linejoin="round"/></svg>
<div class="mi" style="top:368.3px">Créer des copies virtuelles</div>
<div class="ms" style="top:388.0px"></div>
<div class="mi" style="top:393.7px">Paramètres de développement</div>
<svg class="chev" style="top:396.6px" viewBox="0 0 6 10"><path d="M1.2 1.4 L4.8 5 L1.2 8.6" fill="none" stroke="#2a2a2a" stroke-width="1.6" stroke-linecap="round" stroke-linejoin="round"/></svg>
<div class="mi" style="top:410.8px">Paramètres prédéfinis des métadonnées</div>
<svg class="chev" style="top:413.7px" viewBox="0 0 6 10"><path d="M1.2 1.4 L4.8 5 L1.2 8.6" fill="none" stroke="#2a2a2a" stroke-width="1.6" stroke-linecap="round" stroke-linejoin="round"/></svg>
<div class="ms" style="top:430.8px"></div>
<div class="mi" style="top:435.9px">Rotation antihoraire</div>
<div class="mi" style="top:452.9px">Rotation horaire</div>
<div class="ms" style="top:472.9px"></div>
<div class="mi" style="top:478.1px">Métadonnées</div>
<svg class="chev" style="top:481.0px" viewBox="0 0 6 10"><path d="M1.2 1.4 L4.8 5 L1.2 8.6" fill="none" stroke="#2a2a2a" stroke-width="1.6" stroke-linecap="round" stroke-linejoin="round"/></svg>
<div class="mi" style="top:495.1px">Exporter</div>
<svg class="chev" style="top:498.0px" viewBox="0 0 6 10"><path d="M1.2 1.4 L4.8 5 L1.2 8.6" fill="none" stroke="#2a2a2a" stroke-width="1.6" stroke-linecap="round" stroke-linejoin="round"/></svg>
<div class="ms" style="top:514.9px"></div>
<div class="mi" style="top:520.7px">Envoyer des photos par courrier électronique...</div>
<div class="ms" style="top:539.7px"></div>
<div class="mi" style="top:545.7px">Utiliser en tant que photo de couverture</div>
<div class="mi" style="top:562.7px">Supprimer de la collection</div>
<div class="ms" style="top:582.3px"></div>
<div class="mi" style="top:587.7px">Options d'affichage...</div>
</div>
<!-- ===== submenu ===== -->
<div class="menu" id="sm" style="font-size:10.85px;left:1015px;top:374px;width:322px;height:270.5px;background:#c4c4c4">
<div class="mi" style="top:4.9px">Modifier dans Adobe Photoshop 2023...</div>
<div class="ms" style="top:24.7px"></div>
<div class="mi" style="top:30.1px">Modifier dans Adobe Photoshop (Beta).app...</div>
<div class="ms" style="top:49.7px"></div>
<div class="mi" style="top:55.1px">Adobe Photoshop 2022</div>
<div class="mi" style="top:72.1px">Photoshop 2023</div>
<div class="mi" style="top:89.1px">PHOTOSHOP BETA</div>
<div class="mi" style="top:106.1px">ps2022</div>
<div class="mi" style="top:123.1px">TOPAZ DENOISE</div>
<div class="mi" style="top:140.1px">Topaz Gigapixel</div>
<div class="mi" style="top:157.1px">TOPAZ SHARPEN</div>
<div class="ms" style="top:177.0px"></div>
<div class="abs" style="left:3.5px;right:3.5px;top:182.2px;height:17px;border-radius:3.5px;background:#2a69d6"></div>
<div class="mi" style="top:182.6px;color:#fff;text-shadow:0 0 .4px rgba(255,255,255,.7)">Ouvrir en tant qu'objet dynamique dans Photoshop...</div>
<div class="mi" style="top:199.6px">Ouvrir en tant que calque d'objet dynamique dans Photoshop...</div>
<div class="mi" style="top:216.6px">Fusion panorama dans Photoshop...</div>
<div class="mi" style="top:233.6px">Fusion HDR Pro dans Photoshop...</div>
<div class="mi" style="top:250.6px">Ouvrir en tant que calques dans Photoshop...</div>
</div>
<!-- ===== annotation: red box + arrow + cursor ===== -->
<div class="abs" style="left:1015px;top:551.5px;width:265px;height:26px;border:solid #e8100c;border-width:7px 5px 5.5px 5px"></div>
<svg class="abs" style="left:1310px;top:538px" width="98" height="56" viewBox="0 0 98 56"><path d="M2.5 27 L35 2.5 L35 18 L95.5 18 L95.5 38.5 L35 38.5 L35 53.5Z" fill="#ea0f0a"/></svg>
<svg class="abs" style="left:1150px;top:556px" width="46" height="62" viewBox="0 0 46 62"><path d="M8 5.5 L7.5 50.5 L14 45 L23 57 L33 52 L27 40 L39.5 38Z" fill="#fff"/><path d="M9.9 10.6 L9.7 46 L14.6 41.8 L23.8 54 L30.2 50.8 L23.6 37.8 L34 36.2Z" fill="#e8140e"/></svg>
<!-- bottom black bar -->
</body>
</html>
